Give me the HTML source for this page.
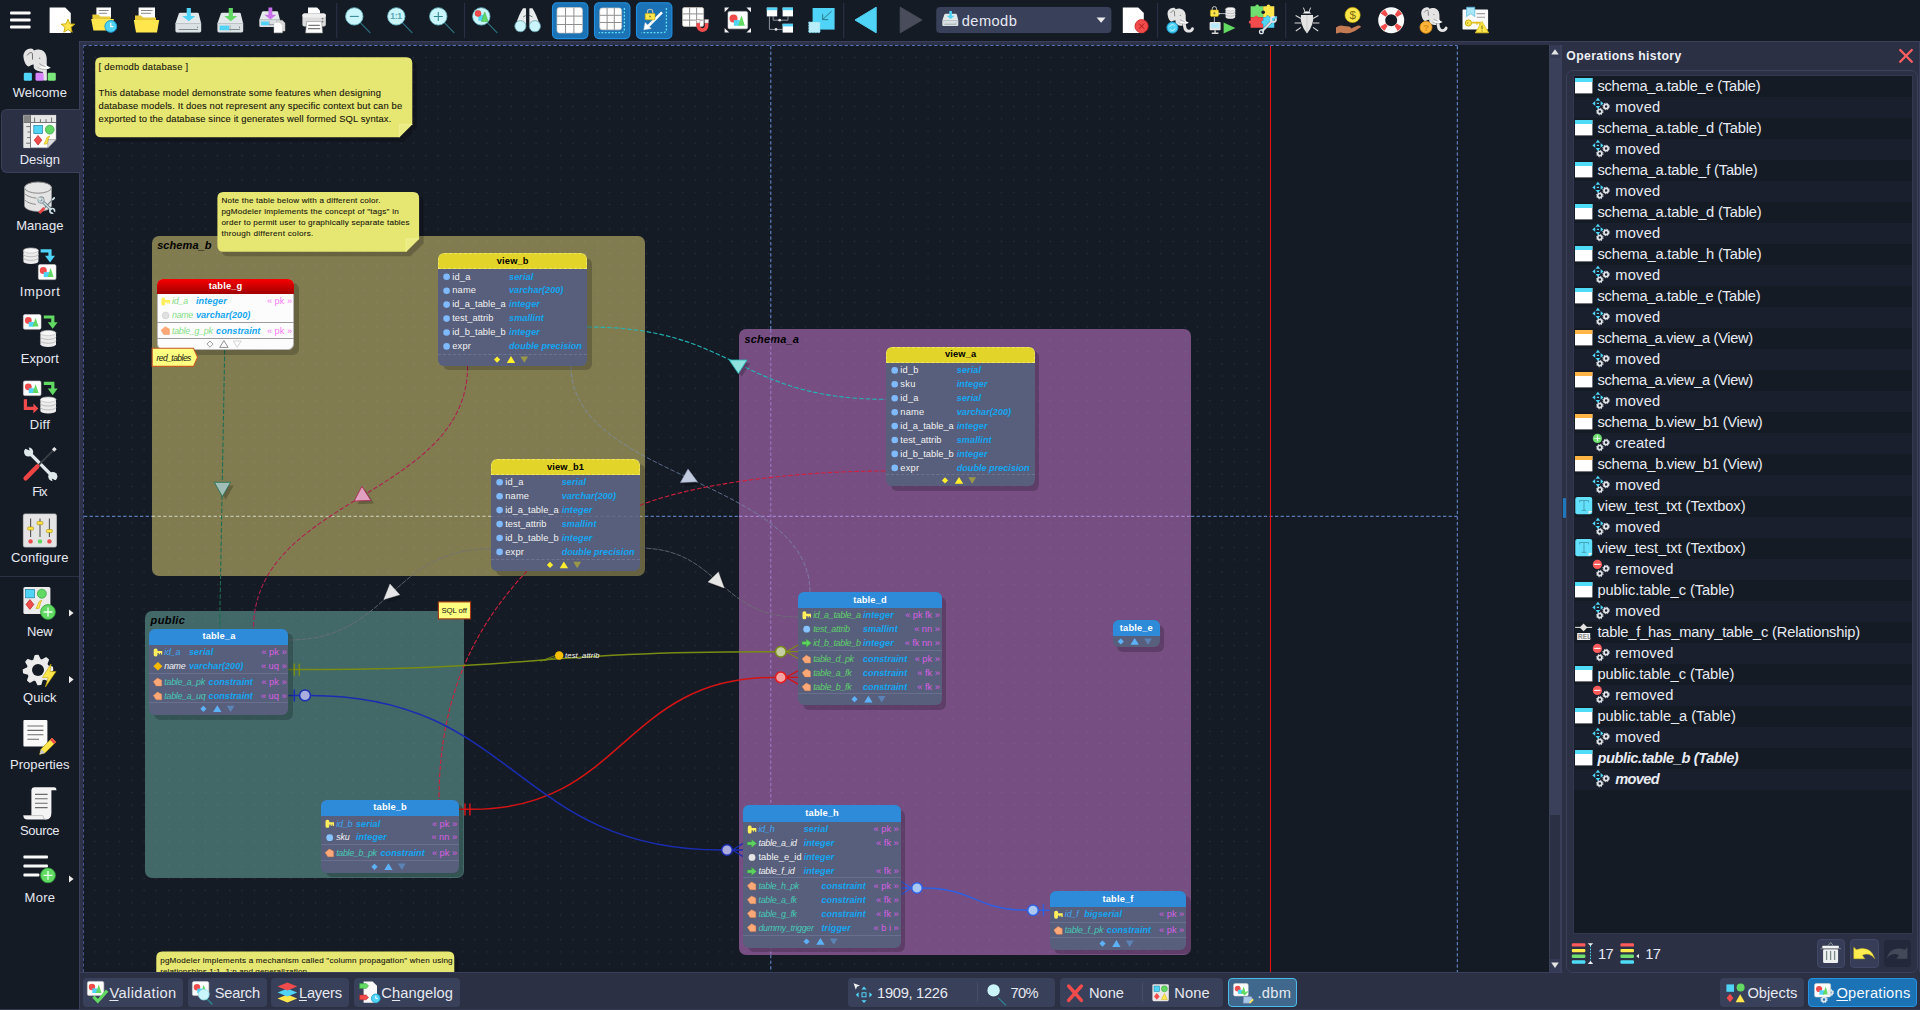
<!DOCTYPE html>
<html><head><meta charset="utf-8"><title>pgModeler</title>
<style>
html,body{margin:0;padding:0;}
body{width:1920px;height:1010px;overflow:hidden;position:relative;background:#151b25;font-family:"Liberation Sans",sans-serif;}
.t{position:absolute;white-space:nowrap;}
.b{position:absolute;box-sizing:border-box;}
svg{position:absolute;overflow:visible;}
u{text-decoration:underline;text-underline-offset:2px;}
</style></head><body>

<div class="b" style="left:79px;top:41px;width:1841px;height:969px;background:#2b3045;"></div>
<div class="b" style="left:79px;top:41px;width:1841px;height:1px;background:#3a405a;"></div>
<div class="b" style="left:79px;top:41px;width:1px;height:969px;background:#3a405a;"></div>
<div class="b" style="left:80px;top:42px;width:3px;height:930px;background:#2d3248;"></div>
<div class="b" style="left:80px;top:42px;width:1470px;height:3px;background:#2d3248;"></div>
<div class="b" style="left:0px;top:1009px;width:1920px;height:1px;background:#353a52;"></div>
<div class="b" style="left:83px;top:45px;width:1466px;height:927px;background:#151b25;overflow:hidden;"></div>
<div class="b" style="left:83px;top:45px;width:1466px;height:927px;overflow:hidden;"><div class="b" style="left:-83px;top:-45px;width:1920px;height:1010px;">
<svg style="left:0;top:0" width="1920" height="1010" fill="none"><g stroke-width="1" stroke-dasharray="3.3 2.3"><path d="M83 45.5 H1457.5" stroke="#5672b8"/><path d="M83.5 45 V972" stroke="#44558e"/></g></svg>
<div class="b" style="left:152px;top:235.5px;width:493px;height:340.5px;background:#817c50;border-radius:7px;"></div>
<div class="b" style="left:739px;top:329.3px;width:452px;height:625.7px;background:#764e82;border-radius:7px;"></div>
<div class="b" style="left:145px;top:610.7px;width:319.3px;height:267.3px;background:#426868;border-radius:7px;"></div>
<div class="b" style="left:84px;top:46px;width:1186px;height:926px;background-image:radial-gradient(circle,rgba(170,180,215,.12) .6px,transparent 1.1px);background-size:12.25px 12.25px;background-position:4.93px 5.48px;"></div>
<div class="t" style="left:157.16px;top:239px;font-size:11px;line-height:12px;color:#000;font-weight:bold;font-style:italic;letter-spacing:0.082px;">schema_b</div>
<div class="t" style="left:744.56px;top:333px;font-size:11px;line-height:12px;color:#000;font-weight:bold;font-style:italic;letter-spacing:0.168px;">schema_a</div>
<div class="t" style="left:150.56px;top:614px;font-size:11px;line-height:12px;color:#000;font-weight:bold;font-style:italic;letter-spacing:0.399px;">public</div>
<svg style="left:0;top:0" width="1920" height="1010" fill="none"><path d="M84 516.3 H152" stroke="#6f98e6" stroke-width="0.95" stroke-dasharray="3.3 2.3"/><path d="M152 516.3 H645" stroke="#d8d8c8" stroke-width="0.95" stroke-dasharray="3.3 2.3"/><path d="M645 516.3 H739" stroke="#6f98e6" stroke-width="0.95" stroke-dasharray="3.3 2.3"/><path d="M739 516.3 H1191" stroke="#b496e6" stroke-width="0.95" stroke-dasharray="3.3 2.3"/><path d="M1191 516.3 H1457" stroke="#6f98e6" stroke-width="0.95" stroke-dasharray="3.3 2.3"/><path d="M770.8 46 V329.3" stroke="#6f98e6" stroke-width="0.95" stroke-dasharray="3.3 2.3"/><path d="M770.8 329.3 V955" stroke="#a585d8" stroke-width="0.85" stroke-dasharray="3.3 2.3"/><path d="M770.8 955 V972" stroke="#6f98e6" stroke-width="0.95" stroke-dasharray="3.3 2.3"/><path d="M1457.3 46 V972" stroke="#6f98e6" stroke-width="0.95" stroke-dasharray="3.3 2.3"/><path d="M1270.5 46 V972" stroke="#e01212" stroke-width="1.1"/><path d="M224.7 350 L219.6 629" stroke="#1d6d55" stroke-width="1.1" stroke-dasharray="4.6 2"/><polygon points="217.5,485.5 233.8,485.5 225.6,499.8" fill="rgba(0,0,0,.22)"/><polygon points="214.3,482.3 230.6,482.3 222.4,496.6" fill="#a0bdb6" stroke="#1d6d55" stroke-width="0.8" stroke-linejoin="round"/><path d="M467.6 366 C467.6 497 253.5 497 253.5 629" stroke="#ad1f4e" stroke-width="1.1" stroke-dasharray="4.6 2"/><polygon points="365.1,489.6 357.4,504.2 374.1,503.6" fill="rgba(0,0,0,.22)"/><polygon points="361.9,486.4 354.2,501.0 370.9,500.4" fill="#dfa0c2" stroke="#ad1f4e" stroke-width="0.8" stroke-linejoin="round"/><path d="M587.3 327 C736.5 327 736.5 399.3 886.1 399.3" stroke="#22b7b7" stroke-width="1.1" stroke-dasharray="4.6 2"/><polygon points="732.4,363.2 750.2,363.2 741.6,376.8" fill="rgba(0,0,0,.22)"/><polygon points="729.2,360.0 747.0,360.0 738.4,373.6" fill="#90e2de" stroke="#22b7b7" stroke-width="0.8" stroke-linejoin="round"/><path d="M571 366 C571 479 810 479 810 592.2" stroke="#7c90b8" stroke-width=".8" stroke-dasharray="4.6 2" opacity=".85"/><polygon points="691.2,472.2 683.6,485.8 700.7,485.0" fill="rgba(0,0,0,.22)"/><polygon points="688.0,469.0 680.4,482.6 697.5,481.8" fill="#c2cadd" stroke="#8f9cbc" stroke-width="0.5" stroke-linejoin="round"/><path d="M640 505.4 C690 485 790 471 886.1 471" stroke="#d21f3e" stroke-width="1.1" stroke-dasharray="4.6 2"/><path d="M527 571 C479.4 622 439 690 439 800" stroke="#d21f3e" stroke-width="1.1" stroke-dasharray="4.6 2"/><path d="M491 548.8 C390 548.8 390 640 289 640" stroke="#6f7076" stroke-width=".8" stroke-dasharray="5 1.2"/><polygon points="393.2,587.2 387.0,602.6 403.0,598.0" fill="rgba(0,0,0,.22)"/><polygon points="390.0,584.0 383.8,599.4 399.8,594.8" fill="#e6e6e6" stroke="#cfcfcf" stroke-width="0.4" stroke-linejoin="round"/><path d="M640 548.1 C719 548.1 719 617 798.1 617" stroke="#6f7076" stroke-width=".8" stroke-dasharray="5 1.2"/><polygon points="721.6,575.2 711.2,585.2 727.4,591.2" fill="rgba(0,0,0,.22)"/><polygon points="718.4,572.0 708.0,582.0 724.2,588.0" fill="#e6e6e6" stroke="#cfcfcf" stroke-width="0.4" stroke-linejoin="round"/><g stroke="#788c14" stroke-width="1.5"><path d="M288.5 669.6 H303 C534 669.6 534 651.7 765 651.7 H776"/><path d="M294.3 663.4 V675.8 M299.3 663.4 V675.8"/><path d="M540.3 661.4 L556 655.2 M544 660.6 L556 657.4" stroke-width=".9"/><path d="M786.2 651.7 L798.1 645 M786.2 651.7 H798.1 M786.2 651.7 L798.1 658.5" stroke-width="1.3"/><circle cx="780.8" cy="651.7" r="5.3" fill="#c6cda2"/></g><circle cx="559.2" cy="655.5" r="4.2" fill="#f7c000"/><g stroke="#d41414" stroke-width="1.5"><path d="M459 809.3 H473 C623 809.3 623 677.4 773 677.4 H776"/><path d="M465 803.4 V815.6 M469.9 803.4 V815.6"/><path d="M786.2 677.4 L798.1 670.7 M786.2 677.4 H798.1 M786.2 677.4 L798.1 684.1" stroke-width="1.3"/><circle cx="780.8" cy="677.4" r="5.3" fill="#f5a3a3" stroke="#e61c1c"/></g><g stroke="#1a2db2" stroke-width="1.5"><path d="M288.5 695.4 H300 M310.5 695.4 C516 695.4 516 850 721.5 850"/><path d="M294.3 689.4 V701.6"/><path d="M732.4 850 L743.4 843.3 M732.4 850 H743.4 M732.4 850 L743.4 856.7" stroke-width="1.3"/><circle cx="305" cy="695.4" r="5.4" fill="#a9acdc"/><circle cx="727" cy="850" r="5.3" fill="#a9acdc"/></g><g stroke="#2f60e2" stroke-width="1.5"><path d="M922.4 888 C975 888 975 910.2 1027.6 910.2 M1038.4 910.2 H1049.8"/><path d="M1043.4 904.2 V916.2"/><path d="M911.6 888 L900.7 881.3 M911.6 888 H900.7 M911.6 888 L900.7 894.7" stroke-width="1.3"/><circle cx="917" cy="888" r="5.3" fill="#aac6f2"/><circle cx="1033" cy="910.2" r="5.3" fill="#aac6f2"/></g></svg>
<div class="t" style="left:565.10px;top:651px;font-size:7.6px;line-height:9px;color:#f4f4f4;font-style:italic;letter-spacing:0.104px;">test_attrib</div>
<div class="b" style="left:161.5px;top:283.0px;width:137px;height:71.5px;background:rgba(0,0,0,.2);border-radius:6px;"></div>
<div class="b" style="left:157px;top:278.5px;width:137px;height:71.5px;background:#fcfcfc;border-radius:6px;border:0.6px solid #b8b8b8;"></div>
<div class="b" style="left:157px;top:278.5px;width:137px;height:15.5px;background:linear-gradient(#f80000,#a00000);border-radius:6px 6px 0 0;"></div>
<div class="t" style="left:208.77px;top:281px;font-size:9.3px;line-height:10px;color:#fff;font-weight:bold;letter-spacing:0.150px;">table_g</div>
<div class="t" style="left:172.04px;top:296px;font-size:8.9px;line-height:10px;color:#86dd86;font-style:italic;letter-spacing:-0.185px;">id_a</div>
<div class="t" style="left:195.94px;top:296px;font-size:9.114px;line-height:10px;color:#12a6f3;font-weight:bold;font-style:italic;letter-spacing:0.070px;">integer</div>
<div class="t" style="left:266.88px;top:296px;font-size:9.3px;line-height:10px;color:#ff7dff;letter-spacing:-0.029px;">« pk »</div>
<div class="t" style="left:172.04px;top:310px;font-size:8.9px;line-height:10px;color:#86dd86;font-style:italic;letter-spacing:-0.321px;">name</div>
<div class="t" style="left:195.94px;top:310px;font-size:9.114px;line-height:10px;color:#12a6f3;font-weight:bold;font-style:italic;letter-spacing:0.016px;">varchar(200)</div>
<div class="b" style="left:157px;top:321.7px;width:137px;height:1px;background:#9c9c9c;"></div>
<div class="t" style="left:172.04px;top:326px;font-size:8.9px;line-height:10px;color:#86dd86;font-style:italic;letter-spacing:-0.285px;">table_g_pk</div>
<div class="t" style="left:216.04px;top:326px;font-size:9.114px;line-height:10px;color:#12a6f3;font-weight:bold;font-style:italic;letter-spacing:0.031px;">constraint</div>
<div class="t" style="left:266.88px;top:326px;font-size:9.3px;line-height:10px;color:#ff7dff;letter-spacing:-0.029px;">« pk »</div>
<div class="b" style="left:157px;top:337.7px;width:137px;height:1px;background:#9c9c9c;"></div>
<svg style="left:0;top:0" width="1920" height="1010"><path d="M161.4 299.4 q0 -1.8 1.8 -1.8 h.5 q1.5 0 1.5 1.6 v.9 h4.7 v3.7 h-1.3 v-1.5 h-.9 v1.2 h-1.2 v-1.2 h-1.3 v1.4 q0 1.9 -1.6 1.9 h-.5 q-1.7 0 -1.7 -1.9z" fill="#ffef5c"/><circle cx="165.6" cy="315.5" r="3.4" fill="#e0e0e0" stroke="#c8c8c8" stroke-width=".5"/><path d="M161.0 330.2 l4.2 -3.5 l4.2 2.2 v5.6 h-5.6z" fill="#ffa877" stroke="#e88850" stroke-width=".4"/><path d="M206.9 344.1 l3.1 -3.1 l3.1 3.1 l-3.1 3.1z" fill="none" stroke="#777" stroke-width=".7"/><path d="M219.7 347.4 h8.4 l-4.2 -6.8z" fill="none" stroke="#666" stroke-width=".7"/><path d="M233.3 341.0 h7.8 l-3.9 6.4z" fill="none" stroke="#c4c4c4" stroke-width=".7"/></svg>
<div class="b" style="left:442.5px;top:257.9px;width:149.29999999999995px;height:112.20000000000002px;background:rgba(0,0,0,.2);border-radius:6px;"></div>
<div class="b" style="left:438px;top:253.4px;width:149.29999999999995px;height:112.20000000000002px;background:#575f7c;border-radius:6px;"></div>
<div class="b" style="left:438px;top:253.4px;width:149.29999999999995px;height:15.799999999999983px;background:#e3d42a;border-radius:6px 6px 0 0;border:0.8px dashed #efe66e;"></div>
<div class="t" style="left:496.77px;top:256px;font-size:9.3px;line-height:10px;color:#000;font-weight:bold;letter-spacing:0.150px;">view_b</div>
<div class="t" style="left:452.23px;top:272px;font-size:9.3px;line-height:10px;color:#f2f2f2;letter-spacing:0.189px;">id_a</div>
<div class="t" style="left:509.04px;top:272px;font-size:9.114px;line-height:10px;color:#12a6f3;font-weight:bold;font-style:italic;letter-spacing:0.097px;">serial</div>
<div class="t" style="left:452.23px;top:285px;font-size:9.3px;line-height:10px;color:#f2f2f2;letter-spacing:0.170px;">name</div>
<div class="t" style="left:509.04px;top:285px;font-size:9.114px;line-height:10px;color:#12a6f3;font-weight:bold;font-style:italic;letter-spacing:0.016px;">varchar(200)</div>
<div class="t" style="left:452.23px;top:299px;font-size:9.3px;line-height:10px;color:#f2f2f2;letter-spacing:0.019px;">id_a_table_a</div>
<div class="t" style="left:509.04px;top:299px;font-size:9.114px;line-height:10px;color:#12a6f3;font-weight:bold;font-style:italic;letter-spacing:0.070px;">integer</div>
<div class="t" style="left:452.23px;top:313px;font-size:9.3px;line-height:10px;color:#f2f2f2;letter-spacing:0.034px;">test_attrib</div>
<div class="t" style="left:509.04px;top:313px;font-size:9.114px;line-height:10px;color:#12a6f3;font-weight:bold;font-style:italic;letter-spacing:0.054px;">smallint</div>
<div class="t" style="left:452.23px;top:327px;font-size:9.3px;line-height:10px;color:#f2f2f2;letter-spacing:0.019px;">id_b_table_b</div>
<div class="t" style="left:509.04px;top:327px;font-size:9.114px;line-height:10px;color:#12a6f3;font-weight:bold;font-style:italic;letter-spacing:0.070px;">integer</div>
<div class="t" style="left:452.23px;top:341px;font-size:9.3px;line-height:10px;color:#f2f2f2;letter-spacing:0.188px;">expr</div>
<div class="t" style="left:509.04px;top:341px;font-size:9.114px;line-height:10px;color:#12a6f3;font-weight:bold;font-style:italic;">double precision</div>
<div class="b" style="left:438px;top:353.5px;width:149.29999999999995px;height:1px;border-top:0.8px dashed #6c7491;"></div>
<svg style="left:0;top:0" width="1920" height="1010"><circle cx="446.6" cy="276.8" r="3.3" fill="#7fbaff"/><circle cx="446.6" cy="290.7" r="3.3" fill="#7fbaff"/><circle cx="446.6" cy="304.6" r="3.3" fill="#7fbaff"/><circle cx="446.6" cy="318.6" r="3.3" fill="#7fbaff"/><circle cx="446.6" cy="332.5" r="3.3" fill="#7fbaff"/><circle cx="446.6" cy="346.4" r="3.3" fill="#7fbaff"/><path d="M494.0 359.6 l3.1 -3.1 l3.1 3.1 l-3.1 3.1z" fill="#ffee2e"/><path d="M506.8 362.9 h8.4 l-4.2 -6.8z" fill="#ffee2e"/><path d="M520.4 356.4 h7.8 l-3.9 6.4z" fill="#9a9748"/></svg>
<div class="b" style="left:495.5px;top:463.5px;width:149px;height:112px;background:rgba(0,0,0,.2);border-radius:6px;"></div>
<div class="b" style="left:491px;top:459px;width:149px;height:112px;background:#575f7c;border-radius:6px;"></div>
<div class="b" style="left:491px;top:459px;width:149px;height:15.699999999999989px;background:#e3d42a;border-radius:6px 6px 0 0;border:0.8px dashed #efe66e;"></div>
<div class="t" style="left:546.96px;top:462px;font-size:9.3px;line-height:10px;color:#000;font-weight:bold;letter-spacing:0.150px;">view_b1</div>
<div class="t" style="left:505.23px;top:477px;font-size:9.3px;line-height:10px;color:#f2f2f2;letter-spacing:0.189px;">id_a</div>
<div class="t" style="left:561.64px;top:477px;font-size:9.114px;line-height:10px;color:#12a6f3;font-weight:bold;font-style:italic;letter-spacing:0.097px;">serial</div>
<div class="t" style="left:505.23px;top:491px;font-size:9.3px;line-height:10px;color:#f2f2f2;letter-spacing:0.170px;">name</div>
<div class="t" style="left:561.64px;top:491px;font-size:9.114px;line-height:10px;color:#12a6f3;font-weight:bold;font-style:italic;letter-spacing:0.016px;">varchar(200)</div>
<div class="t" style="left:505.23px;top:505px;font-size:9.3px;line-height:10px;color:#f2f2f2;letter-spacing:0.019px;">id_a_table_a</div>
<div class="t" style="left:561.64px;top:505px;font-size:9.114px;line-height:10px;color:#12a6f3;font-weight:bold;font-style:italic;letter-spacing:0.070px;">integer</div>
<div class="t" style="left:505.23px;top:519px;font-size:9.3px;line-height:10px;color:#f2f2f2;letter-spacing:0.034px;">test_attrib</div>
<div class="t" style="left:561.64px;top:519px;font-size:9.114px;line-height:10px;color:#12a6f3;font-weight:bold;font-style:italic;letter-spacing:0.054px;">smallint</div>
<div class="t" style="left:505.23px;top:533px;font-size:9.3px;line-height:10px;color:#f2f2f2;letter-spacing:0.019px;">id_b_table_b</div>
<div class="t" style="left:561.64px;top:533px;font-size:9.114px;line-height:10px;color:#12a6f3;font-weight:bold;font-style:italic;letter-spacing:0.070px;">integer</div>
<div class="t" style="left:505.23px;top:547px;font-size:9.3px;line-height:10px;color:#f2f2f2;letter-spacing:0.188px;">expr</div>
<div class="t" style="left:561.64px;top:547px;font-size:9.114px;line-height:10px;color:#12a6f3;font-weight:bold;font-style:italic;">double precision</div>
<div class="b" style="left:491px;top:558.8px;width:149px;height:1px;border-top:0.8px dashed #6c7491;"></div>
<svg style="left:0;top:0" width="1920" height="1010"><circle cx="499.6" cy="482.3" r="3.3" fill="#7fbaff"/><circle cx="499.6" cy="496.2" r="3.3" fill="#7fbaff"/><circle cx="499.6" cy="510.1" r="3.3" fill="#7fbaff"/><circle cx="499.6" cy="524.1" r="3.3" fill="#7fbaff"/><circle cx="499.6" cy="538.0" r="3.3" fill="#7fbaff"/><circle cx="499.6" cy="551.9" r="3.3" fill="#7fbaff"/><path d="M546.9 564.9 l3.1 -3.1 l3.1 3.1 l-3.1 3.1z" fill="#ffee2e"/><path d="M559.7 568.2 h8.4 l-4.2 -6.8z" fill="#ffee2e"/><path d="M573.3 561.8 h7.8 l-3.9 6.4z" fill="#9a9748"/></svg>
<svg style="left:0;top:0" width="1920" height="1010"><path d="M491 516.3 H640" stroke="#6b7391" stroke-width=".9" stroke-dasharray="3.1 2.67"/></svg>
<div class="b" style="left:890.6px;top:351.4px;width:148.89999999999998px;height:139.60000000000002px;background:rgba(0,0,0,.2);border-radius:6px;"></div>
<div class="b" style="left:886.1px;top:346.9px;width:148.89999999999998px;height:139.60000000000002px;background:#575f7c;border-radius:6px;"></div>
<div class="b" style="left:886.1px;top:346.9px;width:148.89999999999998px;height:15.900000000000034px;background:#e3d42a;border-radius:6px 6px 0 0;border:0.8px dashed #efe66e;"></div>
<div class="t" style="left:944.92px;top:349px;font-size:9.3px;line-height:10px;color:#000;font-weight:bold;letter-spacing:0.150px;">view_a</div>
<div class="t" style="left:900.33px;top:365px;font-size:9.3px;line-height:10px;color:#f2f2f2;letter-spacing:0.189px;">id_b</div>
<div class="t" style="left:956.74px;top:365px;font-size:9.114px;line-height:10px;color:#12a6f3;font-weight:bold;font-style:italic;letter-spacing:0.097px;">serial</div>
<div class="t" style="left:900.33px;top:379px;font-size:9.3px;line-height:10px;color:#f2f2f2;letter-spacing:0.300px;">sku</div>
<div class="t" style="left:956.74px;top:379px;font-size:9.114px;line-height:10px;color:#12a6f3;font-weight:bold;font-style:italic;letter-spacing:0.070px;">integer</div>
<div class="t" style="left:900.33px;top:393px;font-size:9.3px;line-height:10px;color:#f2f2f2;letter-spacing:0.189px;">id_a</div>
<div class="t" style="left:956.74px;top:393px;font-size:9.114px;line-height:10px;color:#12a6f3;font-weight:bold;font-style:italic;letter-spacing:0.097px;">serial</div>
<div class="t" style="left:900.33px;top:407px;font-size:9.3px;line-height:10px;color:#f2f2f2;letter-spacing:0.170px;">name</div>
<div class="t" style="left:956.74px;top:407px;font-size:9.114px;line-height:10px;color:#12a6f3;font-weight:bold;font-style:italic;letter-spacing:0.016px;">varchar(200)</div>
<div class="t" style="left:900.33px;top:421px;font-size:9.3px;line-height:10px;color:#f2f2f2;letter-spacing:0.019px;">id_a_table_a</div>
<div class="t" style="left:956.74px;top:421px;font-size:9.114px;line-height:10px;color:#12a6f3;font-weight:bold;font-style:italic;letter-spacing:0.070px;">integer</div>
<div class="t" style="left:900.33px;top:435px;font-size:9.3px;line-height:10px;color:#f2f2f2;letter-spacing:0.034px;">test_attrib</div>
<div class="t" style="left:956.74px;top:435px;font-size:9.114px;line-height:10px;color:#12a6f3;font-weight:bold;font-style:italic;letter-spacing:0.054px;">smallint</div>
<div class="t" style="left:900.33px;top:449px;font-size:9.3px;line-height:10px;color:#f2f2f2;letter-spacing:0.019px;">id_b_table_b</div>
<div class="t" style="left:956.74px;top:449px;font-size:9.114px;line-height:10px;color:#12a6f3;font-weight:bold;font-style:italic;letter-spacing:0.070px;">integer</div>
<div class="t" style="left:900.33px;top:463px;font-size:9.3px;line-height:10px;color:#f2f2f2;letter-spacing:0.188px;">expr</div>
<div class="t" style="left:956.74px;top:463px;font-size:9.114px;line-height:10px;color:#12a6f3;font-weight:bold;font-style:italic;">double precision</div>
<div class="b" style="left:886.1px;top:474.3px;width:148.89999999999998px;height:1px;border-top:0.8px dashed #6c7491;"></div>
<svg style="left:0;top:0" width="1920" height="1010"><circle cx="894.7" cy="370.4" r="3.3" fill="#7fbaff"/><circle cx="894.7" cy="384.3" r="3.3" fill="#7fbaff"/><circle cx="894.7" cy="398.2" r="3.3" fill="#7fbaff"/><circle cx="894.7" cy="412.2" r="3.3" fill="#7fbaff"/><circle cx="894.7" cy="426.1" r="3.3" fill="#7fbaff"/><circle cx="894.7" cy="440.0" r="3.3" fill="#7fbaff"/><circle cx="894.7" cy="453.9" r="3.3" fill="#7fbaff"/><circle cx="894.7" cy="467.9" r="3.3" fill="#7fbaff"/><path d="M941.9 480.4 l3.1 -3.1 l3.1 3.1 l-3.1 3.1z" fill="#ffee2e"/><path d="M954.8 483.7 h8.4 l-4.2 -6.8z" fill="#ffee2e"/><path d="M968.3 477.3 h7.8 l-3.9 6.4z" fill="#9a9748"/></svg>
<div class="b" style="left:802.6px;top:596.7px;width:143.69999999999993px;height:113.19999999999993px;background:rgba(0,0,0,.2);border-radius:6px;"></div>
<div class="b" style="left:798.1px;top:592.2px;width:143.69999999999993px;height:113.19999999999993px;background:#575f7c;border-radius:6px;"></div>
<div class="b" style="left:798.1px;top:592.2px;width:143.69999999999993px;height:15.5px;background:#2e8bda;border-radius:6px 6px 0 0;"></div>
<div class="t" style="left:853.22px;top:595px;font-size:9.3px;line-height:10px;color:#fff;font-weight:bold;letter-spacing:0.150px;">table_d</div>
<div class="t" style="left:813.14px;top:610px;font-size:8.9px;line-height:10px;color:#5fd06a;font-style:italic;letter-spacing:-0.284px;">id_a_table_a</div>
<div class="t" style="left:862.94px;top:610px;font-size:9.114px;line-height:10px;color:#12a6f3;font-weight:bold;font-style:italic;letter-spacing:0.070px;">integer</div>
<div class="t" style="left:905.21px;top:610px;font-size:9.3px;line-height:10px;color:#d95ee2;letter-spacing:-0.061px;">« pk fk »</div>
<div class="t" style="left:813.14px;top:624px;font-size:8.9px;line-height:10px;color:#5fd06a;font-style:italic;letter-spacing:-0.223px;">test_attrib</div>
<div class="t" style="left:862.94px;top:624px;font-size:9.114px;line-height:10px;color:#12a6f3;font-weight:bold;font-style:italic;letter-spacing:0.054px;">smallint</div>
<div class="t" style="left:914.18px;top:624px;font-size:9.3px;line-height:10px;color:#d95ee2;letter-spacing:-0.032px;">« nn »</div>
<div class="t" style="left:813.14px;top:638px;font-size:8.9px;line-height:10px;color:#5fd06a;font-style:italic;letter-spacing:-0.284px;">id_b_table_b</div>
<div class="t" style="left:862.94px;top:638px;font-size:9.114px;line-height:10px;color:#12a6f3;font-weight:bold;font-style:italic;letter-spacing:0.070px;">integer</div>
<div class="t" style="left:904.71px;top:638px;font-size:9.3px;line-height:10px;color:#d95ee2;letter-spacing:-0.063px;">« fk nn »</div>
<div class="b" style="left:798.1px;top:650.2px;width:143.69999999999993px;height:1px;background:#68708d;"></div>
<div class="t" style="left:813.14px;top:654px;font-size:8.9px;line-height:10px;color:#5fd06a;font-style:italic;letter-spacing:-0.285px;">table_d_pk</div>
<div class="t" style="left:862.94px;top:654px;font-size:9.114px;line-height:10px;color:#12a6f3;font-weight:bold;font-style:italic;letter-spacing:0.031px;">constraint</div>
<div class="t" style="left:914.68px;top:654px;font-size:9.3px;line-height:10px;color:#d95ee2;letter-spacing:-0.029px;">« pk »</div>
<div class="t" style="left:813.14px;top:668px;font-size:8.9px;line-height:10px;color:#5fd06a;font-style:italic;letter-spacing:-0.264px;">table_a_fk</div>
<div class="t" style="left:862.94px;top:668px;font-size:9.114px;line-height:10px;color:#12a6f3;font-weight:bold;font-style:italic;letter-spacing:0.031px;">constraint</div>
<div class="t" style="left:917.18px;top:668px;font-size:9.3px;line-height:10px;color:#d95ee2;letter-spacing:-0.010px;">« fk »</div>
<div class="t" style="left:813.14px;top:682px;font-size:8.9px;line-height:10px;color:#5fd06a;font-style:italic;letter-spacing:-0.264px;">table_b_fk</div>
<div class="t" style="left:862.94px;top:682px;font-size:9.114px;line-height:10px;color:#12a6f3;font-weight:bold;font-style:italic;letter-spacing:0.031px;">constraint</div>
<div class="t" style="left:917.18px;top:682px;font-size:9.3px;line-height:10px;color:#d95ee2;letter-spacing:-0.010px;">« fk »</div>
<div class="b" style="left:798.1px;top:692.5px;width:143.69999999999993px;height:1px;background:#68708d;"></div>
<svg style="left:0;top:0" width="1920" height="1010"><path d="M802.5 613.1 q0 -1.8 1.8 -1.8 h.5 q1.5 0 1.5 1.6 v.9 h4.7 v3.7 h-1.3 v-1.5 h-.9 v1.2 h-1.2 v-1.2 h-1.3 v1.4 q0 1.9 -1.6 1.9 h-.5 q-1.7 0 -1.7 -1.9z" fill="#ffef5c"/><circle cx="806.7" cy="629.2" r="3.4" fill="#86c3ff"/><path d="M802.1 641.6 h4.2 v-2.6 l5 4.1 l-5 4.1 v-2.6 h-4.2z" fill="#5fd35f" stroke="#2f9d3a" stroke-width=".4"/><path d="M802.1 658.7 l4.2 -3.5 l4.2 2.2 v5.6 h-5.6z" fill="#ffa877" stroke="#e88850" stroke-width=".4"/><path d="M802.1 672.6 l4.2 -3.5 l4.2 2.2 v5.6 h-5.6z" fill="#ffa877" stroke="#e88850" stroke-width=".4"/><path d="M802.1 686.5 l4.2 -3.5 l4.2 2.2 v5.6 h-5.6z" fill="#ffa877" stroke="#e88850" stroke-width=".4"/><path d="M851.4 699.2 l3.1 -3.1 l3.1 3.1 l-3.1 3.1z" fill="#5db2f7"/><path d="M864.2 702.5 h8.4 l-4.2 -6.8z" fill="#5db2f7"/><path d="M877.8 696.1 h7.8 l-3.9 6.4z" fill="#5d83b4"/></svg>
<div class="b" style="left:1117.2px;top:624.6px;width:47.200000000000045px;height:27.100000000000023px;background:rgba(0,0,0,.2);border-radius:6px;"></div>
<div class="b" style="left:1112.7px;top:620.1px;width:47.200000000000045px;height:27.100000000000023px;background:#575f7c;border-radius:6px;"></div>
<div class="b" style="left:1112.7px;top:620.1px;width:47.200000000000045px;height:15.600000000000023px;background:#2e8bda;border-radius:6px 6px 0 0;"></div>
<div class="t" style="left:1119.83px;top:623px;font-size:9.3px;line-height:10px;color:#fff;font-weight:bold;letter-spacing:0.150px;">table_e</div>
<svg style="left:0;top:0" width="1920" height="1010"><path d="M1117.7 641.5 l3.1 -3.1 l3.1 3.1 l-3.1 3.1z" fill="#5db2f7"/><path d="M1130.5 644.8 h8.4 l-4.2 -6.8z" fill="#5db2f7"/><path d="M1144.1 638.4 h7.8 l-3.9 6.4z" fill="#5d83b4"/></svg>
<div class="b" style="left:747.9px;top:809.6px;width:157.30000000000007px;height:142.69999999999993px;background:rgba(0,0,0,.2);border-radius:6px;"></div>
<div class="b" style="left:743.4px;top:805.1px;width:157.30000000000007px;height:142.69999999999993px;background:#575f7c;border-radius:6px;"></div>
<div class="b" style="left:743.4px;top:805.1px;width:157.30000000000007px;height:16.899999999999977px;background:#2e8bda;border-radius:6px 6px 0 0;"></div>
<div class="t" style="left:805.32px;top:808px;font-size:9.3px;line-height:10px;color:#fff;font-weight:bold;letter-spacing:0.150px;">table_h</div>
<div class="t" style="left:758.44px;top:824px;font-size:8.9px;line-height:10px;color:#3fa6f7;font-style:italic;letter-spacing:-0.185px;">id_h</div>
<div class="t" style="left:803.64px;top:824px;font-size:9.114px;line-height:10px;color:#12a6f3;font-weight:bold;font-style:italic;letter-spacing:0.097px;">serial</div>
<div class="t" style="left:873.58px;top:824px;font-size:9.3px;line-height:10px;color:#d95ee2;letter-spacing:-0.029px;">« pk »</div>
<div class="t" style="left:758.44px;top:838px;font-size:8.9px;line-height:10px;color:#f2f2f2;font-style:italic;letter-spacing:-0.264px;">table_a_id</div>
<div class="t" style="left:803.64px;top:838px;font-size:9.114px;line-height:10px;color:#12a6f3;font-weight:bold;font-style:italic;letter-spacing:0.070px;">integer</div>
<div class="t" style="left:876.08px;top:838px;font-size:9.3px;line-height:10px;color:#d95ee2;letter-spacing:-0.010px;">« fk »</div>
<div class="t" style="left:758.43px;top:852px;font-size:9.3px;line-height:10px;color:#f2f2f2;letter-spacing:0.035px;">table_e_id</div>
<div class="t" style="left:803.64px;top:852px;font-size:9.114px;line-height:10px;color:#12a6f3;font-weight:bold;font-style:italic;letter-spacing:0.070px;">integer</div>
<div class="t" style="left:758.44px;top:866px;font-size:8.9px;line-height:10px;color:#f2f2f2;font-style:italic;letter-spacing:-0.243px;">table_f_id</div>
<div class="t" style="left:803.64px;top:866px;font-size:9.114px;line-height:10px;color:#12a6f3;font-weight:bold;font-style:italic;letter-spacing:0.070px;">integer</div>
<div class="t" style="left:876.08px;top:866px;font-size:9.3px;line-height:10px;color:#d95ee2;letter-spacing:-0.010px;">« fk »</div>
<div class="b" style="left:743.4px;top:877.0px;width:157.30000000000007px;height:1px;background:#68708d;"></div>
<div class="t" style="left:758.44px;top:881px;font-size:8.9px;line-height:10px;color:#46c9b6;font-style:italic;letter-spacing:-0.285px;">table_h_pk</div>
<div class="t" style="left:821.44px;top:881px;font-size:9.114px;line-height:10px;color:#12a6f3;font-weight:bold;font-style:italic;letter-spacing:0.031px;">constraint</div>
<div class="t" style="left:873.58px;top:881px;font-size:9.3px;line-height:10px;color:#d95ee2;letter-spacing:-0.029px;">« pk »</div>
<div class="t" style="left:758.44px;top:895px;font-size:8.9px;line-height:10px;color:#46c9b6;font-style:italic;letter-spacing:-0.264px;">table_a_fk</div>
<div class="t" style="left:821.44px;top:895px;font-size:9.114px;line-height:10px;color:#12a6f3;font-weight:bold;font-style:italic;letter-spacing:0.031px;">constraint</div>
<div class="t" style="left:876.08px;top:895px;font-size:9.3px;line-height:10px;color:#d95ee2;letter-spacing:-0.010px;">« fk »</div>
<div class="t" style="left:758.44px;top:909px;font-size:8.9px;line-height:10px;color:#46c9b6;font-style:italic;letter-spacing:-0.264px;">table_g_fk</div>
<div class="t" style="left:821.44px;top:909px;font-size:9.114px;line-height:10px;color:#12a6f3;font-weight:bold;font-style:italic;letter-spacing:0.031px;">constraint</div>
<div class="t" style="left:876.08px;top:909px;font-size:9.3px;line-height:10px;color:#d95ee2;letter-spacing:-0.010px;">« fk »</div>
<div class="t" style="left:758.44px;top:923px;font-size:8.9px;line-height:10px;color:#46c9b6;font-style:italic;letter-spacing:-0.313px;">dummy_trigger</div>
<div class="t" style="left:821.44px;top:923px;font-size:9.114px;line-height:10px;color:#12a6f3;font-weight:bold;font-style:italic;letter-spacing:0.072px;">trigger</div>
<div class="t" style="left:873.58px;top:923px;font-size:9.3px;line-height:10px;color:#d95ee2;letter-spacing:-0.024px;">« b i »</div>
<div class="b" style="left:743.4px;top:934.7px;width:157.30000000000007px;height:1px;background:#68708d;"></div>
<svg style="left:0;top:0" width="1920" height="1010"><path d="M747.8 827.4 q0 -1.8 1.8 -1.8 h.5 q1.5 0 1.5 1.6 v.9 h4.7 v3.7 h-1.3 v-1.5 h-.9 v1.2 h-1.2 v-1.2 h-1.3 v1.4 q0 1.9 -1.6 1.9 h-.5 q-1.7 0 -1.7 -1.9z" fill="#ffef5c"/><path d="M747.4 842.0 h4.2 v-2.6 l5 4.1 l-5 4.1 v-2.6 h-4.2z" fill="#5fd35f" stroke="#2f9d3a" stroke-width=".4"/><circle cx="752.0" cy="857.4" r="3.4" fill="#e6e6e6"/><path d="M747.4 869.9 h4.2 v-2.6 l5 4.1 l-5 4.1 v-2.6 h-4.2z" fill="#5fd35f" stroke="#2f9d3a" stroke-width=".4"/><path d="M747.4 885.5 l4.2 -3.5 l4.2 2.2 v5.6 h-5.6z" fill="#ffa877" stroke="#e88850" stroke-width=".4"/><path d="M747.4 899.4 l4.2 -3.5 l4.2 2.2 v5.6 h-5.6z" fill="#ffa877" stroke="#e88850" stroke-width=".4"/><path d="M747.4 913.3 l4.2 -3.5 l4.2 2.2 v5.6 h-5.6z" fill="#ffa877" stroke="#e88850" stroke-width=".4"/><path d="M747.4 927.3 l4.2 -3.5 l4.2 2.2 v5.6 h-5.6z" fill="#ffa877" stroke="#e88850" stroke-width=".4"/><path d="M803.4 941.5 l3.1 -3.1 l3.1 3.1 l-3.1 3.1z" fill="#5db2f7"/><path d="M816.2 944.8 h8.4 l-4.2 -6.8z" fill="#5db2f7"/><path d="M829.8 938.4 h7.8 l-3.9 6.4z" fill="#5d83b4"/></svg>
<div class="b" style="left:1054.3px;top:895.6px;width:136.4000000000001px;height:58.60000000000002px;background:rgba(0,0,0,.2);border-radius:6px;"></div>
<div class="b" style="left:1049.8px;top:891.1px;width:136.4000000000001px;height:58.60000000000002px;background:#575f7c;border-radius:6px;"></div>
<div class="b" style="left:1049.8px;top:891.1px;width:136.4000000000001px;height:16.0px;background:#2e8bda;border-radius:6px 6px 0 0;"></div>
<div class="t" style="left:1102.56px;top:894px;font-size:9.3px;line-height:10px;color:#fff;font-weight:bold;letter-spacing:0.150px;">table_f</div>
<div class="t" style="left:1064.84px;top:909px;font-size:8.9px;line-height:10px;color:#3fa6f7;font-style:italic;letter-spacing:-0.122px;">id_f</div>
<div class="t" style="left:1084.14px;top:909px;font-size:9.114px;line-height:10px;color:#12a6f3;font-weight:bold;font-style:italic;letter-spacing:0.043px;">bigserial</div>
<div class="t" style="left:1159.08px;top:909px;font-size:9.3px;line-height:10px;color:#d95ee2;letter-spacing:-0.029px;">« pk »</div>
<div class="b" style="left:1049.8px;top:921.5px;width:136.4000000000001px;height:1px;background:#68708d;"></div>
<div class="t" style="left:1064.84px;top:925px;font-size:8.9px;line-height:10px;color:#46c9b6;font-style:italic;letter-spacing:-0.264px;">table_f_pk</div>
<div class="t" style="left:1106.84px;top:925px;font-size:9.114px;line-height:10px;color:#12a6f3;font-weight:bold;font-style:italic;letter-spacing:0.031px;">constraint</div>
<div class="t" style="left:1159.08px;top:925px;font-size:9.3px;line-height:10px;color:#d95ee2;letter-spacing:-0.029px;">« pk »</div>
<div class="b" style="left:1049.8px;top:937.0px;width:136.4000000000001px;height:1px;background:#68708d;"></div>
<svg style="left:0;top:0" width="1920" height="1010"><path d="M1054.2 912.5 q0 -1.8 1.8 -1.8 h.5 q1.5 0 1.5 1.6 v.9 h4.7 v3.7 h-1.3 v-1.5 h-.9 v1.2 h-1.2 v-1.2 h-1.3 v1.4 q0 1.9 -1.6 1.9 h-.5 q-1.7 0 -1.7 -1.9z" fill="#ffef5c"/><path d="M1053.8 930.0 l4.2 -3.5 l4.2 2.2 v5.6 h-5.6z" fill="#ffa877" stroke="#e88850" stroke-width=".4"/><path d="M1099.4 943.6 l3.1 -3.1 l3.1 3.1 l-3.1 3.1z" fill="#5db2f7"/><path d="M1112.2 946.9 h8.4 l-4.2 -6.8z" fill="#5db2f7"/><path d="M1125.8 940.5 h7.8 l-3.9 6.4z" fill="#5d83b4"/></svg>
<div class="b" style="left:153.8px;top:633.3px;width:139.2px;height:86.5px;background:rgba(0,0,0,.2);border-radius:6px;"></div>
<div class="b" style="left:149.3px;top:628.8px;width:139.2px;height:86.5px;background:#575f7c;border-radius:6px;"></div>
<div class="b" style="left:149.3px;top:628.8px;width:139.2px;height:16.0px;background:#2e8bda;border-radius:6px 6px 0 0;"></div>
<div class="t" style="left:202.43px;top:631px;font-size:9.3px;line-height:10px;color:#fff;font-weight:bold;letter-spacing:0.150px;">table_a</div>
<div class="t" style="left:164.34px;top:647px;font-size:8.9px;line-height:10px;color:#3fa6f7;font-style:italic;letter-spacing:-0.185px;">id_a</div>
<div class="t" style="left:188.94px;top:647px;font-size:9.114px;line-height:10px;color:#12a6f3;font-weight:bold;font-style:italic;letter-spacing:0.097px;">serial</div>
<div class="t" style="left:261.38px;top:647px;font-size:9.3px;line-height:10px;color:#d95ee2;letter-spacing:-0.029px;">« pk »</div>
<div class="t" style="left:164.34px;top:661px;font-size:8.9px;line-height:10px;color:#f2f2f2;font-style:italic;letter-spacing:-0.321px;">name</div>
<div class="t" style="left:188.94px;top:661px;font-size:9.114px;line-height:10px;color:#12a6f3;font-weight:bold;font-style:italic;letter-spacing:0.016px;">varchar(200)</div>
<div class="t" style="left:260.88px;top:661px;font-size:9.3px;line-height:10px;color:#d95ee2;letter-spacing:-0.032px;">« uq »</div>
<div class="b" style="left:149.3px;top:673.1px;width:139.2px;height:1px;background:#68708d;"></div>
<div class="t" style="left:164.34px;top:677px;font-size:8.9px;line-height:10px;color:#46c9b6;font-style:italic;letter-spacing:-0.285px;">table_a_pk</div>
<div class="t" style="left:208.54px;top:677px;font-size:9.114px;line-height:10px;color:#12a6f3;font-weight:bold;font-style:italic;letter-spacing:0.031px;">constraint</div>
<div class="t" style="left:261.38px;top:677px;font-size:9.3px;line-height:10px;color:#d95ee2;letter-spacing:-0.029px;">« pk »</div>
<div class="t" style="left:164.34px;top:691px;font-size:8.9px;line-height:10px;color:#46c9b6;font-style:italic;letter-spacing:-0.289px;">table_a_uq</div>
<div class="t" style="left:208.54px;top:691px;font-size:9.114px;line-height:10px;color:#12a6f3;font-weight:bold;font-style:italic;letter-spacing:0.031px;">constraint</div>
<div class="t" style="left:260.88px;top:691px;font-size:9.3px;line-height:10px;color:#d95ee2;letter-spacing:-0.032px;">« uq »</div>
<div class="b" style="left:149.3px;top:701.9px;width:139.2px;height:1px;background:#68708d;"></div>
<svg style="left:0;top:0" width="1920" height="1010"><path d="M153.7 650.2 q0 -1.8 1.8 -1.8 h.5 q1.5 0 1.5 1.6 v.9 h4.7 v3.7 h-1.3 v-1.5 h-.9 v1.2 h-1.2 v-1.2 h-1.3 v1.4 q0 1.9 -1.6 1.9 h-.5 q-1.7 0 -1.7 -1.9z" fill="#ffef5c"/><path d="M153.3 666.3 l4.6 -4.2 l4.6 4.2 l-4.6 4.2z" fill="#f7b800"/><path d="M153.3 681.6 l4.2 -3.5 l4.2 2.2 v5.6 h-5.6z" fill="#ffa877" stroke="#e88850" stroke-width=".4"/><path d="M153.3 695.5 l4.2 -3.5 l4.2 2.2 v5.6 h-5.6z" fill="#ffa877" stroke="#e88850" stroke-width=".4"/><path d="M200.3 708.8 l3.1 -3.1 l3.1 3.1 l-3.1 3.1z" fill="#5db2f7"/><path d="M213.1 712.1 h8.4 l-4.2 -6.8z" fill="#5db2f7"/><path d="M226.7 705.7 h7.8 l-3.9 6.4z" fill="#5d83b4"/></svg>
<div class="b" style="left:325.6px;top:804.4px;width:137.89999999999998px;height:73.10000000000002px;background:rgba(0,0,0,.2);border-radius:6px;"></div>
<div class="b" style="left:321.1px;top:799.9px;width:137.89999999999998px;height:73.10000000000002px;background:#575f7c;border-radius:6px;"></div>
<div class="b" style="left:321.1px;top:799.9px;width:137.89999999999998px;height:16.300000000000068px;background:#2e8bda;border-radius:6px 6px 0 0;"></div>
<div class="t" style="left:373.32px;top:802px;font-size:9.3px;line-height:10px;color:#fff;font-weight:bold;letter-spacing:0.150px;">table_b</div>
<div class="t" style="left:336.14px;top:819px;font-size:8.9px;line-height:10px;color:#3fa6f7;font-style:italic;letter-spacing:-0.185px;">id_b</div>
<div class="t" style="left:355.94px;top:819px;font-size:9.114px;line-height:10px;color:#12a6f3;font-weight:bold;font-style:italic;letter-spacing:0.097px;">serial</div>
<div class="t" style="left:431.88px;top:819px;font-size:9.3px;line-height:10px;color:#d95ee2;letter-spacing:-0.029px;">« pk »</div>
<div class="t" style="left:336.14px;top:832px;font-size:8.9px;line-height:10px;color:#f2f2f2;font-style:italic;letter-spacing:-0.165px;">sku</div>
<div class="t" style="left:355.94px;top:832px;font-size:9.114px;line-height:10px;color:#12a6f3;font-weight:bold;font-style:italic;letter-spacing:0.070px;">integer</div>
<div class="t" style="left:431.38px;top:832px;font-size:9.3px;line-height:10px;color:#d95ee2;letter-spacing:-0.032px;">« nn »</div>
<div class="b" style="left:321.1px;top:844.0px;width:137.89999999999998px;height:1px;background:#68708d;"></div>
<div class="t" style="left:336.14px;top:848px;font-size:8.9px;line-height:10px;color:#46c9b6;font-style:italic;letter-spacing:-0.285px;">table_b_pk</div>
<div class="t" style="left:380.44px;top:848px;font-size:9.114px;line-height:10px;color:#12a6f3;font-weight:bold;font-style:italic;letter-spacing:0.031px;">constraint</div>
<div class="t" style="left:431.88px;top:848px;font-size:9.3px;line-height:10px;color:#d95ee2;letter-spacing:-0.029px;">« pk »</div>
<div class="b" style="left:321.1px;top:860.0px;width:137.89999999999998px;height:1px;background:#68708d;"></div>
<svg style="left:0;top:0" width="1920" height="1010"><path d="M325.5 821.6 q0 -1.8 1.8 -1.8 h.5 q1.5 0 1.5 1.6 v.9 h4.7 v3.7 h-1.3 v-1.5 h-.9 v1.2 h-1.2 v-1.2 h-1.3 v1.4 q0 1.9 -1.6 1.9 h-.5 q-1.7 0 -1.7 -1.9z" fill="#ffef5c"/><circle cx="329.7" cy="837.7" r="3.4" fill="#86c3ff"/><path d="M325.1 852.5 l4.2 -3.5 l4.2 2.2 v5.6 h-5.6z" fill="#ffa877" stroke="#e88850" stroke-width=".4"/><path d="M371.4 866.8 l3.1 -3.1 l3.1 3.1 l-3.1 3.1z" fill="#5db2f7"/><path d="M384.2 870.0 h8.4 l-4.2 -6.8z" fill="#5db2f7"/><path d="M397.9 863.6 h7.8 l-3.9 6.4z" fill="#5d83b4"/></svg>
<svg style="left:0;top:0" width="1920" height="1010"><path d="M152.2 348.3 H193.5 L197.6 357.3 L193.5 366.4 H152.2Z" fill="#ffff80" stroke="#c45a28" stroke-width="1.1"/><rect x="438.4" y="601.9" width="32.1" height="17" fill="#ffff80" stroke="#a43a14" stroke-width="1.1"/></svg>
<div class="t" style="left:156.46px;top:353px;font-size:8.5px;line-height:10px;color:#111;font-style:italic;letter-spacing:-0.535px;">red_tables</div>
<div class="t" style="left:441.39px;top:606px;font-size:7.8px;line-height:9px;color:#111;letter-spacing:-0.065px;">SQL off</div>
<svg style="left:0;top:0" width="1920" height="1010"><path d="M101.2 57.2 H406.3 Q412.3 57.2 412.3 63.2 V124.30000000000001 L399.3 137.3 H101.2 Q95.2 137.3 95.2 131.3 V63.2 Q95.2 57.2 101.2 57.2Z" transform="translate(4.5,4.5)" fill="rgba(0,0,0,.2)"/><path d="M101.2 57.2 H406.3 Q412.3 57.2 412.3 63.2 V124.30000000000001 L399.3 137.3 H101.2 Q95.2 137.3 95.2 131.3 V63.2 Q95.2 57.2 101.2 57.2Z" fill="#e6e672"/><path d="M399.3 137.3 V124.30000000000001 H412.3" fill="#ebeb84" stroke="#f2f29a" stroke-width=".8"/></svg><div class="t" style="left:98.62px;top:61px;font-size:9.4px;line-height:11px;color:#16160c;letter-spacing:0.225px;-webkit-text-stroke:.1px #16160c;">[ demodb database ]</div><div class="t" style="left:98.62px;top:87px;font-size:9.4px;line-height:11px;color:#16160c;letter-spacing:0.184px;-webkit-text-stroke:.1px #16160c;">This database model demonstrate some features when designing</div><div class="t" style="left:98.62px;top:100px;font-size:9.4px;line-height:11px;color:#16160c;letter-spacing:0.146px;-webkit-text-stroke:.1px #16160c;">database models. It does not represent any specific context but can be</div><div class="t" style="left:98.62px;top:113px;font-size:9.4px;line-height:11px;color:#16160c;letter-spacing:0.136px;-webkit-text-stroke:.1px #16160c;">exported to the database since it generates well formed SQL syntax.</div>
<svg style="left:0;top:0" width="1920" height="1010"><path d="M223.4 192.1 H413.1 Q419.1 192.1 419.1 198.1 V238.8 L406.1 251.8 H223.4 Q217.4 251.8 217.4 245.8 V198.1 Q217.4 192.1 223.4 192.1Z" transform="translate(4.5,4.5)" fill="rgba(0,0,0,.2)"/><path d="M223.4 192.1 H413.1 Q419.1 192.1 419.1 198.1 V238.8 L406.1 251.8 H223.4 Q217.4 251.8 217.4 245.8 V198.1 Q217.4 192.1 223.4 192.1Z" fill="#e6e672"/><path d="M406.1 251.8 V238.8 H419.1" fill="#ebeb84" stroke="#f2f29a" stroke-width=".8"/></svg><div class="t" style="left:221.38px;top:196px;font-size:8.1px;line-height:9px;color:#16160c;letter-spacing:0.207px;-webkit-text-stroke:.1px #16160c;">Note the table below with a different color.</div><div class="t" style="left:221.38px;top:207px;font-size:8.1px;line-height:9px;color:#16160c;letter-spacing:0.239px;-webkit-text-stroke:.1px #16160c;">pgModeler implements the concept of "tags" in</div><div class="t" style="left:221.38px;top:218px;font-size:8.1px;line-height:9px;color:#16160c;letter-spacing:0.201px;-webkit-text-stroke:.1px #16160c;">order to permit user to graphically separate tables</div><div class="t" style="left:221.38px;top:229px;font-size:8.1px;line-height:9px;color:#16160c;letter-spacing:0.296px;-webkit-text-stroke:.1px #16160c;">through different colors.</div>
<svg style="left:0;top:0" width="1920" height="1010"><path d="M162.3 951.6 H448.3 Q454.3 951.6 454.3 957.6 V997 L441.3 1010 H162.3 Q156.3 1010 156.3 1004 V957.6 Q156.3 951.6 162.3 951.6Z" transform="translate(4.5,4.5)" fill="rgba(0,0,0,.2)"/><path d="M162.3 951.6 H448.3 Q454.3 951.6 454.3 957.6 V997 L441.3 1010 H162.3 Q156.3 1010 156.3 1004 V957.6 Q156.3 951.6 162.3 951.6Z" fill="#e6e672"/><path d="M441.3 1010 V997 H454.3" fill="#ebeb84" stroke="#f2f29a" stroke-width=".8"/></svg><div class="t" style="left:160.18px;top:956px;font-size:8.1px;line-height:9px;color:#16160c;letter-spacing:0.207px;-webkit-text-stroke:.1px #16160c;">pgModeler implements a mechanism called "column propagation" when using</div><div class="t" style="left:160.18px;top:967px;font-size:8.1px;line-height:9px;color:#16160c;letter-spacing:0.093px;-webkit-text-stroke:.1px #16160c;">relationships 1:1, 1:n and generalization.</div>
</div></div>
<div class="b" style="left:79px;top:972px;width:1484px;height:1px;background:#3a405a;"></div>
<div class="b" style="left:1549px;top:45px;width:13px;height:927px;background:#2b3045;border-left:1px solid #3a405a;border-right:2px solid #3a405a;"></div>
<div class="b" style="left:1550px;top:58px;width:10px;height:757px;background:#3a405a;"></div>
<div class="b" style="left:1550px;top:45px;width:10px;height:13px;background:#343a53;"></div>
<div class="b" style="left:1550px;top:959px;width:10px;height:13px;background:#343a53;"></div>
<svg style="left:1549px;top:45px" width="13" height="927"><path d="M2.2 9.5 L9.8 9.5 L6 4.2Z" fill="#e4e4e4"/><path d="M2.2 917.5 L9.8 917.5 L6 923Z" fill="#e4e4e4"/></svg>
<svg style="left:0;top:0" width="1920" height="42"><rect x="552.5" y="2.8" width="35.4" height="35.8" rx="4.5" fill="#1b73b5" stroke="#2190e2" stroke-width="1.1"/><rect x="594.5" y="2.8" width="35.4" height="35.8" rx="4.5" fill="#1b73b5" stroke="#2190e2" stroke-width="1.1"/><rect x="636.5" y="2.8" width="35.4" height="35.8" rx="4.5" fill="#1b73b5" stroke="#2190e2" stroke-width="1.1"/><path d="M336.7 3 V38" stroke="#2a2f43" stroke-width="1.2"/><path d="M464.5 3 V38" stroke="#2a2f43" stroke-width="1.2"/><path d="M843.7 3 V38" stroke="#2a2f43" stroke-width="1.2"/><path d="M1157.5 3 V38" stroke="#2a2f43" stroke-width="1.2"/><path d="M1285.7 3 V38" stroke="#2a2f43" stroke-width="1.2"/><g fill="#fafafa"><rect x="10" y="11.4" width="20.6" height="3.2" rx="1"/><rect x="10" y="18.4" width="20.6" height="3.2" rx="1"/><rect x="10" y="25.4" width="20.6" height="3.2" rx="1"/></g><g transform="translate(46,4)"><path d="M3.6 3.5 H19.200000000000003 L24.8 9.1 V29 H3.6Z" fill="#fff"/><polygon points="22.00,15.20 23.82,19.89 28.85,20.18 24.95,23.36 26.23,28.22 22.00,25.50 17.77,28.22 19.05,23.36 15.15,20.18 20.18,19.89" fill="#ffe64d" stroke="#c7a600" stroke-width=".9" stroke-linejoin="round"/></g><g transform="translate(88,4)"><rect x="8.4" y="3.5" width="14.6" height="10.5" fill="#fff"/><path d="M10.8 6.5 H20.6 M10.8 9.3 H19" stroke="#8a8a8a" stroke-width="1"/><path d="M4.4 10.4 h6 l2 2.2 h10.200000000000003 v4 h-18.200000000000003z" fill="#e8c93a"/><path d="M3.2 15.0 H25.8 L23.6 26.4 H5.4Z" fill="#ffe64d"/><circle cx="22.8" cy="22.4" r="5.9" fill="#4fd3f7" stroke="#1c9bd1" stroke-width="1"/><path d="M22.8 18.8 V22.6 H25.4" fill="none" stroke="#fff" stroke-width="1.2"/></g><g transform="translate(130,4)"><rect x="8.6" y="3.5" width="16.4" height="12.5" fill="#fff"/><path d="M11.0 6.5 H22.6 M11.0 9.3 H21" stroke="#8a8a8a" stroke-width="1"/><path d="M5 11.4 h6 l2 2.2 h13 v4 h-21z" fill="#e8c93a"/><path d="M3.8 16.0 H29.2 L27 28.4 H6Z" fill="#ffe64d"/></g><g transform="translate(172,4)"><path d="M8.4 8.7 H25.6 Q26.4 8.7 26.7 9.4 L29.2 19.4 H3.4 L6.9 9.4 Q7.4 8.7 8.4 8.7Z" fill="#e3e8ea"/><path d="M3.4 19.4 H29.2 V26.8 Q29.2 28.4 27.6 28.4 H5 Q3.4 28.4 3.4 26.8Z" fill="#dbe1e3"/><path d="M3.4 19.6 H29.2" stroke="#c3cbce" stroke-width=".8"/><path d="M6.8 25.5 H25.8" stroke="#7d8a8e" stroke-width="1"/><rect x="25" y="22.6" width="1" height="1.6" fill="#7d8a8e"/><path d="M14.700000000000001 4 h4.2 v8 h4.4 l-6.5 5.2 l-6.5 -5.2 h4.4z" fill="#4fd3f7"/></g><g transform="translate(214,4)"><path d="M8.4 8.7 H25.6 Q26.4 8.7 26.7 9.4 L29.2 19.4 H3.4 L6.9 9.4 Q7.4 8.7 8.4 8.7Z" fill="#e3e8ea"/><path d="M3.4 19.4 H29.2 V26.8 Q29.2 28.4 27.6 28.4 H5 Q3.4 28.4 3.4 26.8Z" fill="#dbe1e3"/><path d="M3.4 19.6 H29.2" stroke="#c3cbce" stroke-width=".8"/><path d="M6.8 25.5 H25.8" stroke="#7d8a8e" stroke-width="1"/><rect x="25" y="22.6" width="1" height="1.6" fill="#7d8a8e"/><rect x="5.6" y="21.6" width="9.6" height="4.6" fill="#4fd3f7"/><path d="M16.2 21.2 v5.8" stroke="#9aa6aa" stroke-width=".8"/><path d="M14.700000000000001 4 h4.2 v8 h4.4 l-6.5 5.2 l-6.5 -5.2 h4.4z" fill="#62d962"/></g><g transform="translate(256,4)"><g transform="translate(.6,.2) scale(.8)"><path d="M8.4 8.7 H25.6 Q26.4 8.7 26.7 9.4 L29.2 19.4 H3.4 L6.9 9.4 Q7.4 8.7 8.4 8.7Z" fill="#e3e8ea"/><path d="M3.4 19.4 H29.2 V26.8 Q29.2 28.4 27.6 28.4 H5 Q3.4 28.4 3.4 26.8Z" fill="#dbe1e3"/><path d="M3.4 19.6 H29.2" stroke="#c3cbce" stroke-width=".8"/><path d="M6.8 25.5 H25.8" stroke="#7d8a8e" stroke-width="1"/><rect x="25" y="22.6" width="1" height="1.6" fill="#7d8a8e"/><rect x="5.6" y="21.6" width="9.6" height="4.6" fill="#4fd3f7"/><path d="M16.2 21.2 v5.8" stroke="#9aa6aa" stroke-width=".8"/></g><g transform="translate(.1,-.2) scale(.92)"><path d="M13.4 4 h4.2 v8 h4.4 l-6.5 5.2 l-6.5 -5.2 h4.4z" fill="#c871ea"/></g><path d="M20.6 16.2 h5.6 l2.8 2.8 v8 h-8.4z" fill="#d8d8d8" stroke="#b0b0b0" stroke-width=".5"/><path d="M18 18.4 h5.6 l2.8 2.8 v7.6 h-8.4z" fill="#fff" stroke="#c8c8c8" stroke-width=".5"/></g><g transform="translate(298,4)"><path d="M10 9.6 V3.6 H19 L22 6.4 V9.6Z" fill="#fff"/><rect x="4.4" y="9.6" width="23.4" height="12.8" rx="2" fill="#dcdcdc"/><rect x="4.4" y="9.6" width="23.4" height="4" rx="2" fill="#efefef"/><circle cx="24.6" cy="14.6" r=".9" fill="#777"/><circle cx="24.6" cy="17.6" r=".9" fill="#777"/><path d="M8.6 17.6 H23.6 L24.6 29 H7.6Z" fill="#fff" stroke="#8a8a8a" stroke-width=".6"/><path d="M10.4 21.4 H21.8 M10 24.6 H22.2" stroke="#777" stroke-width="1.1"/></g><g transform="translate(341,4)"><path d="M19.6 18.8 L29 28.6" stroke="#2c7482" stroke-width="1.15" stroke-linecap="round"/><circle cx="13.3" cy="12.4" r="8.7" fill="#c9f5fb" stroke="#6bbcc8" stroke-width=".8"/><path d="M8.8 12.4 H17.8" stroke="#2f8794" stroke-width="1.05"/></g><g transform="translate(383,4)"><path d="M19.6 18.8 L29 28.6" stroke="#2c7482" stroke-width="1.15" stroke-linecap="round"/><circle cx="13.3" cy="12.4" r="8.7" fill="#c9f5fb" stroke="#6bbcc8" stroke-width=".8"/><text x="7.2" y="15.4" font-family="Liberation Sans" font-weight="bold" font-size="8.6" fill="#5aa7b2" letter-spacing="-.3">1:1</text></g><g transform="translate(425,4)"><path d="M19.6 18.8 L29 28.6" stroke="#2c7482" stroke-width="1.15" stroke-linecap="round"/><circle cx="13.3" cy="12.4" r="8.7" fill="#c9f5fb" stroke="#6bbcc8" stroke-width=".8"/><path d="M8.8 12.4 H17.8 M13.3 7.9 V16.9" stroke="#2f8794" stroke-width="1.05"/></g><g transform="translate(468,4)"><path d="M19.6 18.8 L29 28.6" stroke="#2c7482" stroke-width="1.15" stroke-linecap="round"/><circle cx="13.3" cy="12.4" r="8.7" fill="#c9f5fb" stroke="#6bbcc8" stroke-width=".8"/><rect x="10.4" y="10.8" width="5.6" height="6" fill="#4fd3f7"/><path d="M13.4 17.6 l3.4 -9.6 l3.4 9.6z" fill="#62d962" stroke="#36a94a" stroke-width=".5"/><circle cx="10" cy="9.4" r="3" fill="#f24b4b" stroke="#c22" stroke-width=".5"/></g><g transform="translate(511,4)"><path d="M12 4.2 h2.5 q.7 0 .7 .7 V21.6 H4.6 Q7.4 11.4 12 4.2z" fill="#e8eced"/><path d="M21.4 4.2 h-2.5 q-.7 0 -.7 .7 V21.6 H28.8 Q26 11.4 21.4 4.2z" fill="#e8eced"/><path d="M12.2 13 q4.6 -3.6 9.2 0" fill="none" stroke="#5c6b70" stroke-width=".9"/><rect x="15.2" y="4" width="3" height="18" fill="#151b25"/><circle cx="9.4" cy="22.2" r="5.6" fill="#c9f5fb" stroke="#5f9aa6" stroke-width=".7"/><circle cx="23.9" cy="22.2" r="5.6" fill="#c9f5fb" stroke="#5f9aa6" stroke-width=".7"/></g><rect x="557" y="7.6" width="25.4" height="25.4" rx="2.4" fill="#fff" stroke="#cfc6c0" stroke-width=".7"/><path d="M565.5 7.6 v25.4 M573.9 7.6 v25.4 M557 16.1 h25.4 M557 24.5 h25.4" stroke="#8f8f8f" stroke-width="1"/><rect x="599.8" y="8" width="21.8" height="21.8" rx="2.4" fill="#fff" stroke="#cfc6c0" stroke-width=".7"/><path d="M607.1 8 v21.8 M614.3 8 v21.8 M599.8 15.3 h21.8 M599.8 22.5 h21.8" stroke="#8f8f8f" stroke-width="1"/><path d="M624.4 8 V29 Q624.4 32.6 620.8 32.6 H598.8" fill="none" stroke="#5fe0f8" stroke-width="1.3" stroke-dasharray="1.9 1.5"/><path d="M666.4 8 V29 Q666.4 32.6 662.8 32.6 H641.4" fill="none" stroke="#5fe0f8" stroke-width="1.3" stroke-dasharray="1.9 1.5"/><path d="M662 12.4 L647.4 27" stroke="#fff" stroke-width="2.6"/><path d="M643.8 29.8 L645.2 22.6 L651.2 28.6Z" fill="#fff" stroke="#ddd" stroke-width=".5"/><path d="M647.4 13.6 v-1.6 a2.7 2.7 0 0 1 5.4 0 v1.6" fill="none" stroke="#b8b8b8" stroke-width="1.1"/><rect x="645.2" y="13.4" width="9.8" height="6.4" rx=".8" fill="#ffe64d" stroke="#c7a600" stroke-width=".6"/><circle cx="650.1" cy="16.4" r=".9" fill="#8a7a30"/><rect x="682.6" y="7.6" width="21" height="18.8" rx="1.6" fill="#fff" stroke="#cfc6c0" stroke-width=".7"/><path d="M689.6 7.6 v18.8 M696.6 7.6 v18.8 M682.6 13.9 h21 M682.6 20.1 h21" stroke="#8f8f8f" stroke-width="1"/><path d="M696.4 19.6 v6.4 a6 6 0 0 0 12 0 v-6.4 h-3.6 v6.2 a2.4 2.4 0 0 1 -4.8 0 v-6.2z" fill="#f24b4b"/><rect x="696.4" y="19.6" width="3.6" height="3.4" fill="#f4f4f4" stroke="#999" stroke-width=".5"/><rect x="704.8" y="19.6" width="3.6" height="3.4" fill="#f4f4f4" stroke="#999" stroke-width=".5"/><rect x="728" y="11.4" width="19.6" height="17.4" rx="1.5" fill="#fff" stroke="#d0d0d0" stroke-width=".6"/><circle cx="733.5" cy="18.4" r="4.0" fill="#f24b4b"/><rect x="733.9" y="20.1" width="5.9" height="5.7" fill="#4fd3f7"/><path d="M738.2 25.7 l3.3 -10.4 l3.3 10.4z" fill="#62d962"/><g fill="#f2f2f2"><path d="M724.6 7.6 h4.6 l-4.6 4.6z"/><path d="M751 7.6 h-4.6 l4.6 4.6z"/><path d="M724.6 32.6 h4.6 l-4.6 -4.6z"/><path d="M751 32.6 h-4.6 l4.6 -4.6z"/></g><path d="M769.4 16.4 V29.4 H782.6 M773.2 16.4 V20.2 H788 V16.4" fill="none" stroke="#9aa2aa" stroke-width=".9"/><circle cx="779.7" cy="20.2" r="1.4" fill="#e0e0e0"/><circle cx="776" cy="29.4" r="1.4" fill="#e0e0e0"/><rect x="766.8" y="7.6" width="10.4" height="8.8" fill="#fff"/><rect x="766.8" y="7.6" width="10.4" height="2.6" fill="#4fd3f7"/><rect x="782.6" y="7.6" width="10.4" height="8.8" fill="#fff"/><rect x="782.6" y="7.6" width="10.4" height="2.6" fill="#4fd3f7"/><rect x="782.6" y="23.8" width="10.4" height="8.8" fill="#fff"/><rect x="782.6" y="23.8" width="10.4" height="2.6" fill="#4fd3f7"/><rect x="812.6" y="8" width="22" height="21.6" fill="#4fd3f7"/><rect x="808.8" y="22" width="11.2" height="10.6" fill="#b9edf9" stroke="#7fdcf3" stroke-width=".9" stroke-dasharray="1.6 1.2"/><path d="M831.6 11.2 L822.8 19.4 M822.6 14.2 V19.6 H828.2" fill="none" stroke="#2a7a8a" stroke-width="1"/><path d="M855 20 L876.2 7.2 V32.8Z" fill="#4fd3f7" stroke="#4fd3f7" stroke-width="1" stroke-linejoin="round"/><path d="M922 20 L900.2 7.2 V32.8Z" fill="#494d5b" stroke="#494d5b" stroke-width="1" stroke-linejoin="round"/><rect x="936.2" y="7" width="175.2" height="26" rx="4" fill="#394059"/><g transform="translate(940.2,8.4) scale(.62)"><path d="M8.4 8.7 H25.6 Q26.4 8.7 26.7 9.4 L29.2 19.4 H3.4 L6.9 9.4 Q7.4 8.7 8.4 8.7Z" fill="#e3e8ea"/><path d="M3.4 19.4 H29.2 V26.8 Q29.2 28.4 27.6 28.4 H5 Q3.4 28.4 3.4 26.8Z" fill="#dbe1e3"/><path d="M3.4 19.6 H29.2" stroke="#c3cbce" stroke-width=".8"/><path d="M6.8 25.5 H25.8" stroke="#7d8a8e" stroke-width="1"/><rect x="25" y="22.6" width="1" height="1.6" fill="#7d8a8e"/><path d="M14.700000000000001 4 h4.2 v8 h4.4 l-6.5 5.2 l-6.5 -5.2 h4.4z" fill="#4fd3f7"/></g><path d="M1096.6 17.4 h9 l-4.5 5.4z" fill="#ececec"/><g transform="translate(1118,4)"><path d="M4.8 3.5 H20.200000000000003 L25.8 9.1 V29 H4.8Z" fill="#fff"/><circle cx="23.6" cy="22.2" r="6.6" fill="#f24b4b" stroke="#c81e1e" stroke-width=".8"/><path d="M21 19.6 l5.2 5.2 M26.2 19.6 l-5.2 5.2" stroke="#a81818" stroke-width="1"/></g><g transform="translate(1162,4)"><g transform="translate(5.2,3.3) scale(0.78)"><path d="M21.9 19 C21.9 26 22.6 30.6 27.6 30.6 C30.4 30.6 31.8 29.2 32.4 27.4" fill="none" stroke="#e4e4e4" stroke-width="3.7" stroke-linecap="round"/><path d="M.4 8.1 C.6 3.5 3.8 .8 7.9 .6 C9.6 .6 10.4 1.4 11 2.5 C13 1.4 15 1.4 17 1.8 C20.6 2.4 23.2 5 23.7 10 L23.9 19 L19.9 21 L19.8 23.6 C16 23.6 12.4 22.6 10.8 20 L10.6 16.6 C9 16.4 7.4 18 5.4 18.5 C3 18.2 .6 13 .4 8.1Z" fill="#e4e4e4"/><path d="M4.2 7.4 C5.4 5.6 6.8 4.6 8 4.5 C9 4.4 9.3 5 9.4 6 L9.6 11.6" fill="none" stroke="#707070" stroke-width="1"/><path d="M15.9 10.3 l.8 -.8 l.8 .8 l-.8 .8z" fill="#666"/><path d="M14.5 19.4 Q20 18.6 22 16.2 Q25 18.6 27.8 19.7 Q22 23 14.5 19.4Z" fill="#fff"/><path d="M16.4 15.6 Q19 17.8 22.6 18.6" fill="none" stroke="#8a8a8a" stroke-width=".8"/><path d="M14.5 19.4 Q18.6 21.8 23.4 21.4" fill="none" stroke="#9a9a9a" stroke-width=".7"/></g><circle cx="10.4" cy="23.6" r="5.5" fill="#4fd3f7" stroke="#1c9bd1" stroke-width="1"/><path d="M7.8 22.8 a2.8 2.8 0 0 1 5 -1 M13 24.4 a2.8 2.8 0 0 1 -5 1" fill="none" stroke="#bff0fc" stroke-width="1"/></g><g transform="translate(1205,4)"><path d="M9.4 9.6 H21" stroke="#a8b0b8" stroke-width="1"/><path d="M9.4 13 V18" stroke="#a8b0b8" stroke-width="1"/><circle cx="13.6" cy="9.6" r="1.2" fill="#ddd"/><path d="M7.2 6 v-1.2 a2.2 2.2 0 0 1 4.4 0 v1.2" fill="none" stroke="#c8c8c8" stroke-width="1"/><rect x="5.4" y="6" width="8" height="6.4" rx=".8" fill="#ffe64d" stroke="#c7a600" stroke-width=".5"/><path d="M8 9.2 h2.8 M9.4 7.8 v2.8" stroke="#8a7a30" stroke-width=".8"/><path d="M20.6 5.224 v7.752000000000001 a4.8 1.824 0 0 0 9.6 0 v-7.752000000000001z" fill="#ececec"/><path d="M20.6 7.8 a4.8 1.824 0 0 0 9.6 0" fill="none" stroke="#bdbdbd" stroke-width="1"/><path d="M20.6 10.4 a4.8 1.824 0 0 0 9.6 0" fill="none" stroke="#bdbdbd" stroke-width="1"/><ellipse cx="25.400000000000002" cy="5.224" rx="4.8" ry="1.824" fill="#f6f6f6" stroke="#bdbdbd" stroke-width=".7"/><rect x="4.6" y="18" width="11" height="8.2" rx="1" fill="#e8e8e8"/><rect x="5.8" y="19.2" width="8.6" height="5" fill="#b8eafa"/><path d="M10.1 26.2 v2.4 M6.8 29.2 h6.6" stroke="#d8d8d8" stroke-width="1.4"/><path d="M18.6 18.4 L30.4 24 L18.6 29.6Z" fill="#62d962"/></g><g transform="translate(1247,4)"><g transform="translate(.4,-.8) scale(.94,.86)"><path d="M3.4 3.6 h5 a2 2 0 1 1 4 0 h4.4 v5 a2 2 0 1 0 0 4 v3.6 h-13.4z" fill="#6fe06f"/><path d="M16.8 3.6 h3.6 a2 2 0 1 1 4 0 h4.2 v12.6 h-5 a2 2 0 1 0 -4 0 h-2.8 v-3.6 a2 2 0 1 0 0 -4z" fill="#ffe64d"/><path d="M3.4 16.2 h4 a2 2 0 1 1 4 0 h5.4 v4 a2 2 0 1 0 0 4 v4.4 h-13.4 v-4.6 a2 2 0 1 1 0 -4z" fill="#f24b4b"/><path d="M16.8 16.2 h2.8 a2 2 0 1 1 4 0 h5 v12.4 h-11.8 v-4.4 a2 2 0 1 1 0 -4z" fill="#4fd3f7"/></g><path d="M24.6 17.4 L15.6 26.6" stroke="#6f8086" stroke-width="2.8" stroke-linecap="round"/><path d="M24.6 17.4 L15.6 26.6" stroke="#dbe6ea" stroke-width="1.6" stroke-linecap="round"/><circle cx="26.4" cy="15.4" r="2.5" fill="none" stroke="#dbe6ea" stroke-width="1.9"/><path d="M26.8 15 L30 12.6" stroke="#4fd3f7" stroke-width="1.6"/><circle cx="14.4" cy="27.8" r="1.9" fill="none" stroke="#dbe6ea" stroke-width="1.3"/></g><g transform="translate(1291,4)"><path d="M12.4 3.6 L14 8 M19.6 3.6 L18 8" stroke="#d8d8d8" stroke-width="1"/><path d="M4.6 11.6 L10 14.6 M27.4 11.6 L22 14.6 M3.6 19 H10 M28.4 19 H22 M4.8 27 L10 23.4 M27.2 27 L22 23.4" stroke="#d8d8d8" stroke-width="1.1" fill="none"/><path d="M11.6 9.4 q4.4 -4.4 8.8 0z" fill="#f2f2f2"/><path d="M10 11 h12 q1.4 9.6 -6 18.4 q-7.4 -8.8 -6 -18.4z" fill="#e4e4e4"/><path d="M16 11 V29" stroke="#c4c4c4" stroke-width=".7"/></g><g transform="translate(1333,4)"><circle cx="19.6" cy="11" r="7.6" fill="#ffe64d" stroke="#d8bc00" stroke-width=".6"/><text x="16.4" y="15.2" font-size="11.6" font-family="Liberation Sans" fill="#7a6a10">$</text><path d="M3 23.6 q4 -3.4 8 -1.6 l5 .6 q2.4 .4 2 2 l7 -3 q2.6 -.6 3 1.4 q-6 4.6 -11 6 q-5 .6 -9.4 -.4 l-4.6 .8z" fill="#c47a52"/></g><g transform="translate(1375,4)"><circle cx="16.2" cy="16.2" r="9.5" fill="none" stroke="#fafafa" stroke-width="7"/><circle cx="16.2" cy="16.2" r="9.5" fill="none" stroke="#f24b4b" stroke-width="6" stroke-dasharray="4.4 10.52" stroke-dashoffset="-5.26"/></g><g transform="translate(1417,4)"><g transform="translate(3.9,2.7) scale(0.78)"><path d="M21.9 19 C21.9 26 22.6 30.6 27.6 30.6 C30.4 30.6 31.8 29.2 32.4 27.4" fill="none" stroke="#e4e4e4" stroke-width="3.7" stroke-linecap="round"/><path d="M.4 8.1 C.6 3.5 3.8 .8 7.9 .6 C9.6 .6 10.4 1.4 11 2.5 C13 1.4 15 1.4 17 1.8 C20.6 2.4 23.2 5 23.7 10 L23.9 19 L19.9 21 L19.8 23.6 C16 23.6 12.4 22.6 10.8 20 L10.6 16.6 C9 16.4 7.4 18 5.4 18.5 C3 18.2 .6 13 .4 8.1Z" fill="#e4e4e4"/><path d="M4.2 7.4 C5.4 5.6 6.8 4.6 8 4.5 C9 4.4 9.3 5 9.4 6 L9.6 11.6" fill="none" stroke="#707070" stroke-width="1"/><path d="M15.9 10.3 l.8 -.8 l.8 .8 l-.8 .8z" fill="#666"/><path d="M14.5 19.4 Q20 18.6 22 16.2 Q25 18.6 27.8 19.7 Q22 23 14.5 19.4Z" fill="#fff"/><path d="M16.4 15.6 Q19 17.8 22.6 18.6" fill="none" stroke="#8a8a8a" stroke-width=".8"/><path d="M14.5 19.4 Q18.6 21.8 23.4 21.4" fill="none" stroke="#9a9a9a" stroke-width=".7"/></g><circle cx="9" cy="23.3" r="6" fill="#ffb43c" stroke="#e09010" stroke-width=".8"/><text x="6.3" y="27" font-size="9.6" font-family="Liberation Sans" font-weight="bold" fill="#d89010">?</text></g><g transform="translate(1459,4)"><rect x="3.5" y="5.6" width="25.6" height="20" rx=".8" fill="#fafafa"/><path d="M7.6 3.2 h8.2 v9.4 l-4.1 -3 l-4.1 3z" fill="#a9e6f9" stroke="#4fb8dc" stroke-width=".7"/><path d="M17.6 9.6 H26 M17.6 13.2 H26" stroke="#a0a0a0" stroke-width="1.1"/><circle cx="9.4" cy="19" r="3.1" fill="#ffe64d" stroke="#c7a600" stroke-width=".9"/><circle cx="8.6" cy="19" r=".8" fill="#b89a00"/><path d="M12.4 18.6 H21 V21 M18 18.6 V20.6" stroke="#e0c020" stroke-width="1.6" fill="none"/><path d="M23 17.4 L29.6 28.8 H16.4Z" fill="#ffe64d" stroke="#e0c820" stroke-width=".8" stroke-linejoin="round"/><path d="M23 21.4 V25.2 M23 26.4 V27.6" stroke="#8a7a10" stroke-width="1.2"/></g></svg><div class="t" style="left:961.81px;top:13px;font-size:14.67px;line-height:16px;color:#e6e9f2;letter-spacing:0.413px;">demodb</div>
<div class="b" style="left:1px;top:109px;width:79px;height:64.4px;background:#2b3045;border:1px solid #3a405a;border-right:none;border-radius:6px 0 0 6px;"></div>
<div class="b" style="left:0px;top:576px;width:79px;height:1px;background:#2b3045;"></div>
<div class="t" style="left:12.73px;top:85px;font-size:13px;line-height:15px;color:#e6e9f2;letter-spacing:0.033px;">Welcome</div>
<div class="t" style="left:19.73px;top:152px;font-size:13px;line-height:15px;color:#e6e9f2;letter-spacing:-0.065px;">Design</div>
<div class="t" style="left:16.18px;top:218px;font-size:13px;line-height:15px;color:#e6e9f2;letter-spacing:0.053px;">Manage</div>
<div class="t" style="left:19.68px;top:284px;font-size:13px;line-height:15px;color:#e6e9f2;letter-spacing:0.680px;">Import</div>
<div class="t" style="left:20.73px;top:351px;font-size:13px;line-height:15px;color:#e6e9f2;letter-spacing:0.114px;">Export</div>
<div class="t" style="left:29.78px;top:417px;font-size:13px;line-height:15px;color:#e6e9f2;letter-spacing:0.259px;">Diff</div>
<div class="t" style="left:32.18px;top:484px;font-size:13px;line-height:15px;color:#e6e9f2;letter-spacing:-1.044px;">Fix</div>
<div class="t" style="left:11.08px;top:550px;font-size:13px;line-height:15px;color:#e6e9f2;letter-spacing:0.135px;">Configure</div>
<div class="t" style="left:27.08px;top:624px;font-size:13px;line-height:15px;color:#e6e9f2;letter-spacing:-0.283px;">New</div>
<div class="t" style="left:23.03px;top:690px;font-size:13px;line-height:15px;color:#e6e9f2;letter-spacing:0.078px;">Quick</div>
<div class="t" style="left:10.08px;top:757px;font-size:13px;line-height:15px;color:#e6e9f2;letter-spacing:0.022px;">Properties</div>
<div class="t" style="left:20.03px;top:823px;font-size:13px;line-height:15px;color:#e6e9f2;letter-spacing:-0.330px;">Source</div>
<div class="t" style="left:24.53px;top:890px;font-size:13px;line-height:15px;color:#e6e9f2;letter-spacing:0.308px;">More</div>
<svg style="left:0;top:0" width="80" height="1010"><path d="M69 609.4 V616.6 L73.6 613Z" fill="#ececec"/><path d="M69 676.0 V683.2 L73.6 679.6Z" fill="#ececec"/><path d="M69 875.4 V882.6 L73.6 879Z" fill="#ececec"/><g transform="translate(23,48) scale(1)"><path d="M.4 8.1 C.6 3.5 3.8 .8 7.9 .6 C9.6 .6 10.4 1.4 11 2.5 C13 1.4 15 1.4 17 1.8 C20.6 2.4 23.2 5 23.7 10 L23.9 32.4 L20.2 32.4 L19.8 24 C16 23.6 12.4 22.6 10.8 20 L10.6 16.6 C9 16.4 7.4 18 5.4 18.5 C3 18.2 .6 13 .4 8.1Z" fill="#e4e4e4"/><path d="M4.2 7.4 C5.4 5.6 6.8 4.6 8 4.5 C9 4.4 9.3 5 9.4 6 L9.6 11.6" fill="none" stroke="#707070" stroke-width="1"/><path d="M15.9 10.3 l.8 -.8 l.8 .8 l-.8 .8z" fill="#666"/><path d="M14.5 19.4 Q20 18.6 22 16.2 Q25 18.6 27.8 19.7 Q22 23 14.5 19.4Z" fill="#fff"/><path d="M16.4 15.6 Q19 17.8 22.6 18.6" fill="none" stroke="#8a8a8a" stroke-width=".8"/><path d="M14.5 19.4 Q18.6 21.8 23.4 21.4" fill="none" stroke="#9a9a9a" stroke-width=".7"/></g><rect x="23.8" y="72.7" width="8.1" height="8.1" rx="1.4" fill="#4fd3f7"/><rect x="35.5" y="72.7" width="8.1" height="8.1" rx="1.4" fill="#d884ff"/><rect x="47.7" y="72.7" width="8.1" height="8.1" rx="1.4" fill="#7be87b"/><path d="M23.6 115.2 H56 V139.6 L47.8 147.8 H23.6Z" fill="#fff" stroke="#9a9a9a" stroke-width=".5"/><path d="M23.6 115.2 H56 V122.4 H30.6 V147.8 H23.6Z" fill="#e6e6e6"/><rect x="23.6" y="115.2" width="6.8" height="7" fill="#858585"/><path d="M30.5 115.2 V147.8 M23.6 122.5 H56" stroke="#767676" stroke-width="1"/><path d="M34.6 117.6 v4.6 M40.4 119.2 v3 M46 119.2 v3 M51.6 117.6 v4.6 M26.2 126.6 h4 M27.6 132 h2.6 M27.2 137.6 h3 M26.2 143.2 h4" stroke="#6e6e6e" stroke-width="1"/><path d="M47.8 147.8 V139.6 H56Z" fill="#dedede" stroke="#8a8a8a" stroke-width=".6"/><g transform="translate(33.8,125.4) scale(0.96)"><rect x="0" y="0" width="9" height="8.6" fill="#4fd3f7" stroke="#1c7fa0" stroke-width=".7"/><circle cx="16.6" cy="4.4" r="4.6" fill="#62d962" stroke="#2f9d3a" stroke-width=".7"/><path d="M4.4 10.4 l4 5 l-4 5 l-4 -5z" fill="#f24b4b" stroke="#b02020" stroke-width=".7"/><path d="M10.6 19.6 l3.4 -7.4 l2.6 -1.2 l-1.4 2.8 l-1.4 5.4z" fill="#ffe64d" stroke="#c7a600" stroke-width=".6"/></g><path d="M24.5 187.6 v18.2 a13.5 5.6 0 0 0 27 0 v-18.2z" fill="#e4e4e4" stroke="#a0a0a0" stroke-width=".6"/><path d="M24.5 193.6 q3.4 3.6 12 4.6 M24.5 199.8 q3.4 3.6 11.4 4.6" fill="none" stroke="#8c8c8c" stroke-width="1"/><ellipse cx="38" cy="187.6" rx="13.5" ry="5.6" fill="#e6e6e6" stroke="#8c8c8c" stroke-width="1"/><path d="M44.6 207.8 L53.6 198.6" stroke="#6f8086" stroke-width="1.2"/><path d="M52.8 199.4 L54.2 198" stroke="#cfe0e4" stroke-width="1.8" stroke-linecap="round"/><path d="M39.2 213 L44.4 208" stroke="#e64848" stroke-width="3" stroke-linecap="butt"/><path d="M42 201 L51.4 210" stroke="#5e6f75" stroke-width="3"/><path d="M42 201 L51.4 210" stroke="#cfe0e4" stroke-width="1.7"/><circle cx="41" cy="200" r="2.1" fill="none" stroke="#5e6f75" stroke-width="2.6"/><circle cx="41" cy="200" r="2.1" fill="none" stroke="#cfe0e4" stroke-width="1.5"/><path d="M41 200 L38.4 197.6" stroke="#e4e4e4" stroke-width="1.6"/><circle cx="52.2" cy="210.8" r="2.3" fill="none" stroke="#cfe0e4" stroke-width="1.7"/><path d="M52.2 210.8 L55 213.6" stroke="#151b25" stroke-width="1.8"/><path d="M23.4 250.56 v10.879999999999999 a7.5 2.56 0 0 0 15 0 v-10.879999999999999z" fill="#ececec"/><path d="M23.4 254.2 a7.5 2.56 0 0 0 15 0" fill="none" stroke="#bdbdbd" stroke-width="1"/><path d="M23.4 257.8 a7.5 2.56 0 0 0 15 0" fill="none" stroke="#bdbdbd" stroke-width="1"/><ellipse cx="30.9" cy="250.56" rx="7.5" ry="2.56" fill="#f6f6f6" stroke="#bdbdbd" stroke-width=".7"/><path d="M40.6 249.2 h11 v6.6 h3.4 l-5 6.6 l-5 -6.6 h3.4 v-3.4 h-7.8z" fill="#4fd3f7"/><rect x="38.4" y="264.6" width="17.6" height="15" rx="1.5" fill="#fff" stroke="#d0d0d0" stroke-width=".6"/><circle cx="43.3" cy="270.6" r="3.5" fill="#f24b4b"/><rect x="43.7" y="272.1" width="5.3" height="5.0" fill="#4fd3f7"/><path d="M47.6 276.9 l3.0 -9.0 l3.0 9.0z" fill="#62d962"/><rect x="23.4" y="314.6" width="17.6" height="14.6" rx="1.5" fill="#fff" stroke="#d0d0d0" stroke-width=".6"/><circle cx="28.3" cy="320.4" r="3.4" fill="#f24b4b"/><rect x="28.7" y="321.9" width="5.3" height="4.8" fill="#4fd3f7"/><path d="M32.6 326.6 l3.0 -8.8 l3.0 8.8z" fill="#62d962"/><path d="M43.8 315.4 h10.6 v6.8 h3.2 l-4.9 6.6 l-4.9 -6.6 h3.4 v-3.6 h-7.4z" fill="#62d962"/><path d="M40.4 333.056 v11.288 a7.8 2.656 0 0 0 15.6 0 v-11.288z" fill="#ececec"/><path d="M40.4 336.8 a7.8 2.656 0 0 0 15.6 0" fill="none" stroke="#bdbdbd" stroke-width="1"/><path d="M40.4 340.6 a7.8 2.656 0 0 0 15.6 0" fill="none" stroke="#bdbdbd" stroke-width="1"/><ellipse cx="48.199999999999996" cy="333.056" rx="7.8" ry="2.656" fill="#f6f6f6" stroke="#bdbdbd" stroke-width=".7"/><rect x="23.4" y="381" width="17.6" height="14.6" rx="1.5" fill="#fff" stroke="#d0d0d0" stroke-width=".6"/><circle cx="28.3" cy="386.8" r="3.4" fill="#f24b4b"/><rect x="28.7" y="388.3" width="5.3" height="4.8" fill="#4fd3f7"/><path d="M32.6 393.0 l3.0 -8.8 l3.0 8.8z" fill="#62d962"/><path d="M43.8 381.8 h10.6 v6.8 h3.2 l-4.9 6.6 l-4.9 -6.6 h3.4 v-3.6 h-7.4z" fill="#62d962"/><path d="M40.4 399.656 v11.288 a7.8 2.656 0 0 0 15.6 0 v-11.288z" fill="#ececec"/><path d="M40.4 403.4 a7.8 2.656 0 0 0 15.6 0" fill="none" stroke="#bdbdbd" stroke-width="1"/><path d="M40.4 407.2 a7.8 2.656 0 0 0 15.6 0" fill="none" stroke="#bdbdbd" stroke-width="1"/><ellipse cx="48.199999999999996" cy="399.656" rx="7.8" ry="2.656" fill="#f6f6f6" stroke="#bdbdbd" stroke-width=".7"/><path d="M23.8 399.2 h3.2 v7.6 h6.4 v-3.2 l5 4.8 l-5 4.8 v-3.2 h-9.6z" fill="#f24b4b"/><path d="M29 452.4 L52.6 476.4" stroke="#dfe8ea" stroke-width="3.4" stroke-linecap="round"/><circle cx="28.6" cy="452" r="4.6" fill="#dfe8ea"/><circle cx="52.8" cy="476.6" r="4.6" fill="#dfe8ea"/><path d="M23.6 448 l6 2.6 l-1.6 -6.2z M57.8 481.4 l-6 -3 l1.6 6.2z" fill="#151b25"/><path d="M54 449.6 L37 466.6" stroke="#3c4048" stroke-width="1.8"/><path d="M55.6 448 l-2.8 1 l1.8 1.8z" fill="#eee"/><rect x="52.6" y="447.6" width="3.4" height="3.4" fill="#e4e4e4" transform="rotate(45 54.3 449.3)"/><path d="M37.4 466.4 L25.6 478.4" stroke="#ee4444" stroke-width="4.4" stroke-linecap="round"/><rect x="23.4" y="514" width="33" height="33" rx="1.6" fill="#e4e4e4" stroke="#c8c8c8" stroke-width=".8"/><path d="M30.6 518.6 V537 M40 518.6 V537 M49.4 518.6 V537" stroke="#555" stroke-width="1.1"/><rect x="27.6" y="527" width="6" height="3" rx="1" fill="#ffe64d" stroke="#a88c00" stroke-width=".6"/><rect x="37" y="521.6" width="6" height="3" rx="1" fill="#ffe64d" stroke="#a88c00" stroke-width=".6"/><rect x="46.4" y="529.6" width="6" height="3" rx="1" fill="#ffe64d" stroke="#a88c00" stroke-width=".6"/><circle cx="30.6" cy="541.4" r="2.2" fill="#f24b4b"/><circle cx="40" cy="541.4" r="2.2" fill="#62d962"/><circle cx="49.4" cy="541.4" r="2.2" fill="#f24b4b"/><rect x="23.4" y="587" width="27" height="27" rx="1.6" fill="#ececec"/><g transform="translate(25.6,589.4) scale(0.98)"><rect x="0" y="0" width="9" height="8.6" fill="#4fd3f7" stroke="#1c7fa0" stroke-width=".7"/><circle cx="16.6" cy="4.4" r="4.6" fill="#62d962" stroke="#2f9d3a" stroke-width=".7"/><path d="M4.4 10.4 l4 5 l-4 5 l-4 -5z" fill="#f24b4b" stroke="#b02020" stroke-width=".7"/><path d="M10.6 19.6 l3.4 -7.4 l2.6 -1.2 l-1.4 2.8 l-1.4 5.4z" fill="#ffe64d" stroke="#c7a600" stroke-width=".6"/></g><circle cx="48" cy="612" r="7.4" fill="#62d962" stroke="#2f9d3a" stroke-width=".8"/><path d="M43.6 612 h8.8 M48 607.6 v8.8" stroke="#f0fff0" stroke-width="1.3"/><polygon points="52.3,667.2 52.6,670.0 48.4,672.1 47.8,674.1 50.1,678.1 48.3,680.3 43.9,678.8 42.1,679.8 40.8,684.3 38.0,684.6 35.9,680.4 33.9,679.8 29.9,682.1 27.7,680.3 29.2,675.9 28.2,674.1 23.7,672.8 23.4,670.0 27.6,667.9 28.2,665.9 25.9,661.9 27.7,659.7 32.1,661.2 33.9,660.2 35.2,655.7 38.0,655.4 40.1,659.6 42.1,660.2 46.1,657.9 48.3,659.7 46.8,664.1 47.8,665.9" fill="#ececec" stroke="#ececec" stroke-width="1.4" stroke-linejoin="round"/><circle cx="38" cy="670" r="6" fill="#151b25"/><path d="M51 664 L42.4 677.6 H48.2 L45.4 687 L56 671.6 H50z" fill="#ffe64d" stroke="#c7a600" stroke-width=".6"/><rect x="23.4" y="720" width="24" height="26.6" rx="1" fill="#fafafa"/><path d="M27.4 726 H43.4 M27.4 730.4 H43.4 M27.4 734.8 H43.4 M27.4 739.2 H39" stroke="#6a6a6a" stroke-width="1.1"/><path d="M52 738 L56 742 L45 753 L39.6 754.4 L41 749Z" fill="#ffe64d" stroke="#a88c00" stroke-width=".6"/><path d="M52 738 L56 742 L54 744 L50 740Z" fill="#f24b4b"/><path d="M41 749 L45 753 L39.6 754.4Z" fill="#c8c8c8"/><path d="M31.4 790.6 q0 -3.4 3.4 -3.4 H54 q2.6 0 2.4 3 h-5 V813 q0 6.6 -6 6.6 H27.6 q-4.4 0 -4.2 -4 H31.4Z" fill="#f4f4f4"/><path d="M23.4 815.6 h19.4 q.4 4 3.4 4" fill="none" stroke="#b8b8b8" stroke-width=".8"/><path d="M35 794.4 H47.6 M35 798.8 H47.6 M35 803.2 H47.6 M35 807.6 H47.6" stroke="#6a6a6a" stroke-width="1.1"/><g fill="#fafafa"><rect x="23.4" y="855.6" width="24.6" height="3" rx="1"/><rect x="23.4" y="864.6" width="24.6" height="3" rx="1"/><rect x="23.4" y="873.6" width="16" height="3" rx="1"/></g><circle cx="48" cy="875.4" r="7.4" fill="#62d962" stroke="#2f9d3a" stroke-width=".8"/><path d="M43.6 875.4 h8.8 M48 871 v8.8" stroke="#f0fff0" stroke-width="1.3"/></svg>
<div class="b" style="left:1919px;top:42px;width:1px;height:930px;background:#3a405a;"></div>
<div class="t" style="left:1566.31px;top:49px;font-size:12.2px;line-height:14px;color:#eef0f6;font-weight:bold;letter-spacing:0.383px;">Operations history</div>
<svg style="left:1898px;top:48px" width="16" height="16"><path d="M2.2 2 L13.8 13.8 M13.8 2 L2.2 13.8" stroke="#ff5f5f" stroke-width="2.3" stroke-linecap="round"/></svg>
<div class="b" style="left:1566px;top:69.5px;width:351.5px;height:903.5px;border:1px solid #3a405a;border-radius:7px;"></div>
<div class="b" style="left:1572.5px;top:75px;width:340px;height:858.5px;background:#151b25;border:1px solid #333850;"></div>
<div class="b" style="left:1562.5px;top:498px;width:3.3px;height:19.5px;background:#1f78bc;border-radius:1px;"></div>
<div class="t" style="left:1597.41px;top:78px;font-size:14.67px;line-height:16px;color:#e8ebf3;letter-spacing:-0.236px;">schema_a.table_e (Table)</div>
<div class="b" style="left:1573.5px;top:96.5px;width:338px;height:21px;background:#1a1f2d;"></div>
<div class="t" style="left:1615.21px;top:99px;font-size:14.67px;line-height:16px;color:#e8ebf3;letter-spacing:0.261px;">moved</div>
<div class="t" style="left:1597.41px;top:120px;font-size:14.67px;line-height:16px;color:#e8ebf3;letter-spacing:-0.196px;">schema_a.table_d (Table)</div>
<div class="b" style="left:1573.5px;top:138.5px;width:338px;height:21px;background:#1a1f2d;"></div>
<div class="t" style="left:1615.21px;top:141px;font-size:14.67px;line-height:16px;color:#e8ebf3;letter-spacing:0.261px;">moved</div>
<div class="t" style="left:1597.41px;top:162px;font-size:14.67px;line-height:16px;color:#e8ebf3;letter-spacing:-0.184px;">schema_a.table_f (Table)</div>
<div class="b" style="left:1573.5px;top:180.5px;width:338px;height:21px;background:#1a1f2d;"></div>
<div class="t" style="left:1615.21px;top:183px;font-size:14.67px;line-height:16px;color:#e8ebf3;letter-spacing:0.261px;">moved</div>
<div class="t" style="left:1597.41px;top:204px;font-size:14.67px;line-height:16px;color:#e8ebf3;letter-spacing:-0.196px;">schema_a.table_d (Table)</div>
<div class="b" style="left:1573.5px;top:222.5px;width:338px;height:21px;background:#1a1f2d;"></div>
<div class="t" style="left:1615.21px;top:225px;font-size:14.67px;line-height:16px;color:#e8ebf3;letter-spacing:0.261px;">moved</div>
<div class="t" style="left:1597.41px;top:246px;font-size:14.67px;line-height:16px;color:#e8ebf3;letter-spacing:-0.196px;">schema_a.table_h (Table)</div>
<div class="b" style="left:1573.5px;top:264.5px;width:338px;height:21px;background:#1a1f2d;"></div>
<div class="t" style="left:1615.21px;top:267px;font-size:14.67px;line-height:16px;color:#e8ebf3;letter-spacing:0.261px;">moved</div>
<div class="t" style="left:1597.41px;top:288px;font-size:14.67px;line-height:16px;color:#e8ebf3;letter-spacing:-0.236px;">schema_a.table_e (Table)</div>
<div class="b" style="left:1573.5px;top:306.5px;width:338px;height:21px;background:#1a1f2d;"></div>
<div class="t" style="left:1615.21px;top:309px;font-size:14.67px;line-height:16px;color:#e8ebf3;letter-spacing:0.261px;">moved</div>
<div class="t" style="left:1597.41px;top:330px;font-size:14.67px;line-height:16px;color:#e8ebf3;letter-spacing:-0.325px;">schema_a.view_a (View)</div>
<div class="b" style="left:1573.5px;top:348.5px;width:338px;height:21px;background:#1a1f2d;"></div>
<div class="t" style="left:1615.21px;top:351px;font-size:14.67px;line-height:16px;color:#e8ebf3;letter-spacing:0.261px;">moved</div>
<div class="t" style="left:1597.41px;top:372px;font-size:14.67px;line-height:16px;color:#e8ebf3;letter-spacing:-0.325px;">schema_a.view_a (View)</div>
<div class="b" style="left:1573.5px;top:390.5px;width:338px;height:21px;background:#1a1f2d;"></div>
<div class="t" style="left:1615.21px;top:393px;font-size:14.67px;line-height:16px;color:#e8ebf3;letter-spacing:0.261px;">moved</div>
<div class="t" style="left:1597.41px;top:414px;font-size:14.67px;line-height:16px;color:#e8ebf3;letter-spacing:-0.249px;">schema_b.view_b1 (View)</div>
<div class="b" style="left:1573.5px;top:432.5px;width:338px;height:21px;background:#1a1f2d;"></div>
<div class="t" style="left:1615.21px;top:435px;font-size:14.67px;line-height:16px;color:#e8ebf3;letter-spacing:0.158px;">created</div>
<div class="t" style="left:1597.41px;top:456px;font-size:14.67px;line-height:16px;color:#e8ebf3;letter-spacing:-0.249px;">schema_b.view_b1 (View)</div>
<div class="b" style="left:1573.5px;top:474.5px;width:338px;height:21px;background:#1a1f2d;"></div>
<div class="t" style="left:1615.21px;top:477px;font-size:14.67px;line-height:16px;color:#e8ebf3;letter-spacing:0.261px;">moved</div>
<div class="t" style="left:1597.41px;top:498px;font-size:14.67px;line-height:16px;color:#e8ebf3;letter-spacing:-0.042px;">view_test_txt (Textbox)</div>
<div class="b" style="left:1573.5px;top:516.5px;width:338px;height:21px;background:#1a1f2d;"></div>
<div class="t" style="left:1615.21px;top:519px;font-size:14.67px;line-height:16px;color:#e8ebf3;letter-spacing:0.261px;">moved</div>
<div class="t" style="left:1597.41px;top:540px;font-size:14.67px;line-height:16px;color:#e8ebf3;letter-spacing:-0.042px;">view_test_txt (Textbox)</div>
<div class="b" style="left:1573.5px;top:558.5px;width:338px;height:21px;background:#1a1f2d;"></div>
<div class="t" style="left:1615.21px;top:561px;font-size:14.67px;line-height:16px;color:#e8ebf3;letter-spacing:0.184px;">removed</div>
<div class="t" style="left:1597.41px;top:582px;font-size:14.67px;line-height:16px;color:#e8ebf3;letter-spacing:-0.078px;">public.table_c (Table)</div>
<div class="b" style="left:1573.5px;top:600.5px;width:338px;height:21px;background:#1a1f2d;"></div>
<div class="t" style="left:1615.21px;top:603px;font-size:14.67px;line-height:16px;color:#e8ebf3;letter-spacing:0.261px;">moved</div>
<div class="t" style="left:1597.41px;top:624px;font-size:14.67px;line-height:16px;color:#e8ebf3;letter-spacing:-0.183px;">table_f_has_many_table_c (Relationship)</div>
<div class="b" style="left:1573.5px;top:642.5px;width:338px;height:21px;background:#1a1f2d;"></div>
<div class="t" style="left:1615.21px;top:645px;font-size:14.67px;line-height:16px;color:#e8ebf3;letter-spacing:0.184px;">removed</div>
<div class="t" style="left:1597.41px;top:666px;font-size:14.67px;line-height:16px;color:#e8ebf3;letter-spacing:-0.078px;">public.table_c (Table)</div>
<div class="b" style="left:1573.5px;top:684.5px;width:338px;height:21px;background:#1a1f2d;"></div>
<div class="t" style="left:1615.21px;top:687px;font-size:14.67px;line-height:16px;color:#e8ebf3;letter-spacing:0.184px;">removed</div>
<div class="t" style="left:1597.41px;top:708px;font-size:14.67px;line-height:16px;color:#e8ebf3;letter-spacing:-0.046px;">public.table_a (Table)</div>
<div class="b" style="left:1573.5px;top:726.5px;width:338px;height:21px;background:#1a1f2d;"></div>
<div class="t" style="left:1615.21px;top:729px;font-size:14.67px;line-height:16px;color:#e8ebf3;letter-spacing:0.261px;">moved</div>
<div class="t" style="left:1597.41px;top:750px;font-size:14.67px;line-height:16px;color:#e8ebf3;font-weight:bold;font-style:italic;letter-spacing:-0.417px;">public.table_b (Table)</div>
<div class="b" style="left:1573.5px;top:768.5px;width:338px;height:21px;background:#1a1f2d;"></div>
<div class="t" style="left:1615.21px;top:771px;font-size:14.67px;line-height:16px;color:#e8ebf3;font-weight:bold;font-style:italic;letter-spacing:-0.677px;">moved</div>
<svg style="left:0;top:0" width="1920" height="1010"><rect x="1575" y="78" width="17.4" height="15.4" fill="#fff"/><rect x="1575" y="78" width="17.4" height="4" fill="#4fdcf7"/><g fill="none" stroke="#e4e8ec"><circle cx="1606.1" cy="106.45" r="2.1" stroke-width="1.7"/><circle cx="1606.1" cy="106.45" r="3.25" stroke-width="1" stroke-dasharray="1.3 1.25"/><circle cx="1599.8" cy="111.6" r="2.1" stroke-width="1.7"/><circle cx="1599.8" cy="111.6" r="3.25" stroke-width="1" stroke-dasharray="1.3 1.25"/></g><g fill="#4fd8f7"><path d="M1597.9 97.80000000000001 l2.3 2.9 h-4.6z"/><path d="M1597.9 109.0 l2.3 -2.9 h-4.6z"/><path d="M1592.3000000000002 103.4 l2.9 -2.3 v4.6z"/><path d="M1603.5 103.4 l-2.9 -2.3 v4.6z"/><rect x="1596.8000000000002" y="102.80000000000001" width="2.2" height="1.2"/></g><rect x="1575" y="120" width="17.4" height="15.4" fill="#fff"/><rect x="1575" y="120" width="17.4" height="4" fill="#4fdcf7"/><g fill="none" stroke="#e4e8ec"><circle cx="1606.1" cy="148.45" r="2.1" stroke-width="1.7"/><circle cx="1606.1" cy="148.45" r="3.25" stroke-width="1" stroke-dasharray="1.3 1.25"/><circle cx="1599.8" cy="153.6" r="2.1" stroke-width="1.7"/><circle cx="1599.8" cy="153.6" r="3.25" stroke-width="1" stroke-dasharray="1.3 1.25"/></g><g fill="#4fd8f7"><path d="M1597.9 139.8 l2.3 2.9 h-4.6z"/><path d="M1597.9 151.0 l2.3 -2.9 h-4.6z"/><path d="M1592.3000000000002 145.4 l2.9 -2.3 v4.6z"/><path d="M1603.5 145.4 l-2.9 -2.3 v4.6z"/><rect x="1596.8000000000002" y="144.8" width="2.2" height="1.2"/></g><rect x="1575" y="162" width="17.4" height="15.4" fill="#fff"/><rect x="1575" y="162" width="17.4" height="4" fill="#4fdcf7"/><g fill="none" stroke="#e4e8ec"><circle cx="1606.1" cy="190.45" r="2.1" stroke-width="1.7"/><circle cx="1606.1" cy="190.45" r="3.25" stroke-width="1" stroke-dasharray="1.3 1.25"/><circle cx="1599.8" cy="195.6" r="2.1" stroke-width="1.7"/><circle cx="1599.8" cy="195.6" r="3.25" stroke-width="1" stroke-dasharray="1.3 1.25"/></g><g fill="#4fd8f7"><path d="M1597.9 181.8 l2.3 2.9 h-4.6z"/><path d="M1597.9 193.0 l2.3 -2.9 h-4.6z"/><path d="M1592.3000000000002 187.4 l2.9 -2.3 v4.6z"/><path d="M1603.5 187.4 l-2.9 -2.3 v4.6z"/><rect x="1596.8000000000002" y="186.8" width="2.2" height="1.2"/></g><rect x="1575" y="204" width="17.4" height="15.4" fill="#fff"/><rect x="1575" y="204" width="17.4" height="4" fill="#4fdcf7"/><g fill="none" stroke="#e4e8ec"><circle cx="1606.1" cy="232.45" r="2.1" stroke-width="1.7"/><circle cx="1606.1" cy="232.45" r="3.25" stroke-width="1" stroke-dasharray="1.3 1.25"/><circle cx="1599.8" cy="237.6" r="2.1" stroke-width="1.7"/><circle cx="1599.8" cy="237.6" r="3.25" stroke-width="1" stroke-dasharray="1.3 1.25"/></g><g fill="#4fd8f7"><path d="M1597.9 223.8 l2.3 2.9 h-4.6z"/><path d="M1597.9 235.0 l2.3 -2.9 h-4.6z"/><path d="M1592.3000000000002 229.4 l2.9 -2.3 v4.6z"/><path d="M1603.5 229.4 l-2.9 -2.3 v4.6z"/><rect x="1596.8000000000002" y="228.8" width="2.2" height="1.2"/></g><rect x="1575" y="246" width="17.4" height="15.4" fill="#fff"/><rect x="1575" y="246" width="17.4" height="4" fill="#4fdcf7"/><g fill="none" stroke="#e4e8ec"><circle cx="1606.1" cy="274.45" r="2.1" stroke-width="1.7"/><circle cx="1606.1" cy="274.45" r="3.25" stroke-width="1" stroke-dasharray="1.3 1.25"/><circle cx="1599.8" cy="279.6" r="2.1" stroke-width="1.7"/><circle cx="1599.8" cy="279.6" r="3.25" stroke-width="1" stroke-dasharray="1.3 1.25"/></g><g fill="#4fd8f7"><path d="M1597.9 265.79999999999995 l2.3 2.9 h-4.6z"/><path d="M1597.9 277.0 l2.3 -2.9 h-4.6z"/><path d="M1592.3000000000002 271.4 l2.9 -2.3 v4.6z"/><path d="M1603.5 271.4 l-2.9 -2.3 v4.6z"/><rect x="1596.8000000000002" y="270.79999999999995" width="2.2" height="1.2"/></g><rect x="1575" y="288" width="17.4" height="15.4" fill="#fff"/><rect x="1575" y="288" width="17.4" height="4" fill="#4fdcf7"/><g fill="none" stroke="#e4e8ec"><circle cx="1606.1" cy="316.45" r="2.1" stroke-width="1.7"/><circle cx="1606.1" cy="316.45" r="3.25" stroke-width="1" stroke-dasharray="1.3 1.25"/><circle cx="1599.8" cy="321.6" r="2.1" stroke-width="1.7"/><circle cx="1599.8" cy="321.6" r="3.25" stroke-width="1" stroke-dasharray="1.3 1.25"/></g><g fill="#4fd8f7"><path d="M1597.9 307.79999999999995 l2.3 2.9 h-4.6z"/><path d="M1597.9 319.0 l2.3 -2.9 h-4.6z"/><path d="M1592.3000000000002 313.4 l2.9 -2.3 v4.6z"/><path d="M1603.5 313.4 l-2.9 -2.3 v4.6z"/><rect x="1596.8000000000002" y="312.79999999999995" width="2.2" height="1.2"/></g><rect x="1575" y="330" width="17.4" height="15.4" fill="#fff"/><rect x="1575" y="330" width="17.4" height="4" fill="#ffb545"/><g fill="none" stroke="#e4e8ec"><circle cx="1606.1" cy="358.45" r="2.1" stroke-width="1.7"/><circle cx="1606.1" cy="358.45" r="3.25" stroke-width="1" stroke-dasharray="1.3 1.25"/><circle cx="1599.8" cy="363.6" r="2.1" stroke-width="1.7"/><circle cx="1599.8" cy="363.6" r="3.25" stroke-width="1" stroke-dasharray="1.3 1.25"/></g><g fill="#4fd8f7"><path d="M1597.9 349.79999999999995 l2.3 2.9 h-4.6z"/><path d="M1597.9 361.0 l2.3 -2.9 h-4.6z"/><path d="M1592.3000000000002 355.4 l2.9 -2.3 v4.6z"/><path d="M1603.5 355.4 l-2.9 -2.3 v4.6z"/><rect x="1596.8000000000002" y="354.79999999999995" width="2.2" height="1.2"/></g><rect x="1575" y="372" width="17.4" height="15.4" fill="#fff"/><rect x="1575" y="372" width="17.4" height="4" fill="#ffb545"/><g fill="none" stroke="#e4e8ec"><circle cx="1606.1" cy="400.45" r="2.1" stroke-width="1.7"/><circle cx="1606.1" cy="400.45" r="3.25" stroke-width="1" stroke-dasharray="1.3 1.25"/><circle cx="1599.8" cy="405.6" r="2.1" stroke-width="1.7"/><circle cx="1599.8" cy="405.6" r="3.25" stroke-width="1" stroke-dasharray="1.3 1.25"/></g><g fill="#4fd8f7"><path d="M1597.9 391.79999999999995 l2.3 2.9 h-4.6z"/><path d="M1597.9 403.0 l2.3 -2.9 h-4.6z"/><path d="M1592.3000000000002 397.4 l2.9 -2.3 v4.6z"/><path d="M1603.5 397.4 l-2.9 -2.3 v4.6z"/><rect x="1596.8000000000002" y="396.79999999999995" width="2.2" height="1.2"/></g><rect x="1575" y="414" width="17.4" height="15.4" fill="#fff"/><rect x="1575" y="414" width="17.4" height="4" fill="#ffb545"/><g fill="none" stroke="#e4e8ec"><circle cx="1606.1" cy="442.45" r="2.1" stroke-width="1.7"/><circle cx="1606.1" cy="442.45" r="3.25" stroke-width="1" stroke-dasharray="1.3 1.25"/><circle cx="1599.8" cy="447.6" r="2.1" stroke-width="1.7"/><circle cx="1599.8" cy="447.6" r="3.25" stroke-width="1" stroke-dasharray="1.3 1.25"/></g><circle cx="1597.4" cy="438.4" r="4.6" fill="#6fe06f"/><path d="M1594.4 438.4 h6 M1597.4 435.4 v6" stroke="#eaffea" stroke-width="1"/><rect x="1575" y="456" width="17.4" height="15.4" fill="#fff"/><rect x="1575" y="456" width="17.4" height="4" fill="#ffb545"/><g fill="none" stroke="#e4e8ec"><circle cx="1606.1" cy="484.45" r="2.1" stroke-width="1.7"/><circle cx="1606.1" cy="484.45" r="3.25" stroke-width="1" stroke-dasharray="1.3 1.25"/><circle cx="1599.8" cy="489.6" r="2.1" stroke-width="1.7"/><circle cx="1599.8" cy="489.6" r="3.25" stroke-width="1" stroke-dasharray="1.3 1.25"/></g><g fill="#4fd8f7"><path d="M1597.9 475.79999999999995 l2.3 2.9 h-4.6z"/><path d="M1597.9 487.0 l2.3 -2.9 h-4.6z"/><path d="M1592.3000000000002 481.4 l2.9 -2.3 v4.6z"/><path d="M1603.5 481.4 l-2.9 -2.3 v4.6z"/><rect x="1596.8000000000002" y="480.79999999999995" width="2.2" height="1.2"/></g><rect x="1575.3" y="497" width="16.9" height="17.2" rx="2" fill="#62e0fc"/><path d="M1579.6 502.4 v-1.9 h8.9 v1.9 M1584 500.5 V510.4 M1581.8 510.4 h4.4" fill="none" stroke="#45a3b8" stroke-width="1"/><path d="M1588.6 514.2 v-3.2 h3.6z" fill="#f4f0ec"/><g fill="none" stroke="#e4e8ec"><circle cx="1606.1" cy="526.45" r="2.1" stroke-width="1.7"/><circle cx="1606.1" cy="526.45" r="3.25" stroke-width="1" stroke-dasharray="1.3 1.25"/><circle cx="1599.8" cy="531.6" r="2.1" stroke-width="1.7"/><circle cx="1599.8" cy="531.6" r="3.25" stroke-width="1" stroke-dasharray="1.3 1.25"/></g><g fill="#4fd8f7"><path d="M1597.9 517.8 l2.3 2.9 h-4.6z"/><path d="M1597.9 529.0 l2.3 -2.9 h-4.6z"/><path d="M1592.3000000000002 523.4 l2.9 -2.3 v4.6z"/><path d="M1603.5 523.4 l-2.9 -2.3 v4.6z"/><rect x="1596.8000000000002" y="522.8" width="2.2" height="1.2"/></g><rect x="1575.3" y="539" width="16.9" height="17.2" rx="2" fill="#62e0fc"/><path d="M1579.6 544.4 v-1.9 h8.9 v1.9 M1584 542.5 V552.4 M1581.8 552.4 h4.4" fill="none" stroke="#45a3b8" stroke-width="1"/><path d="M1588.6 556.2 v-3.2 h3.6z" fill="#f4f0ec"/><g fill="none" stroke="#e4e8ec"><circle cx="1606.1" cy="568.45" r="2.1" stroke-width="1.7"/><circle cx="1606.1" cy="568.45" r="3.25" stroke-width="1" stroke-dasharray="1.3 1.25"/><circle cx="1599.8" cy="573.6" r="2.1" stroke-width="1.7"/><circle cx="1599.8" cy="573.6" r="3.25" stroke-width="1" stroke-dasharray="1.3 1.25"/></g><circle cx="1597.4" cy="564.4" r="4.6" fill="#ff5a5a"/><path d="M1594.2 564.4 h6.4" stroke="#ffecec" stroke-width="1.2"/><rect x="1575" y="582" width="17.4" height="15.4" fill="#fff"/><rect x="1575" y="582" width="17.4" height="4" fill="#4fdcf7"/><g fill="none" stroke="#e4e8ec"><circle cx="1606.1" cy="610.45" r="2.1" stroke-width="1.7"/><circle cx="1606.1" cy="610.45" r="3.25" stroke-width="1" stroke-dasharray="1.3 1.25"/><circle cx="1599.8" cy="615.6" r="2.1" stroke-width="1.7"/><circle cx="1599.8" cy="615.6" r="3.25" stroke-width="1" stroke-dasharray="1.3 1.25"/></g><g fill="#4fd8f7"><path d="M1597.9 601.8 l2.3 2.9 h-4.6z"/><path d="M1597.9 613.0 l2.3 -2.9 h-4.6z"/><path d="M1592.3000000000002 607.4 l2.9 -2.3 v4.6z"/><path d="M1603.5 607.4 l-2.9 -2.3 v4.6z"/><rect x="1596.8000000000002" y="606.8" width="2.2" height="1.2"/></g><path d="M1575.1 627.4 H1592.1" stroke="#dcdcdc" stroke-width="1.1"/><path d="M1579.7 627.4 l3.85 -3.85 l3.85 3.85 l-3.85 3.85z" fill="#e2e2e2"/><rect x="1577.1" y="633" width="13.1" height="7.1" rx=".6" fill="#f2f2f2"/><text x="1577.9" y="639.2" font-size="6.4" font-family="Liberation Sans" fill="#8c8c8c" font-weight="bold" letter-spacing=".2">REL</text><g fill="none" stroke="#e4e8ec"><circle cx="1606.1" cy="652.45" r="2.1" stroke-width="1.7"/><circle cx="1606.1" cy="652.45" r="3.25" stroke-width="1" stroke-dasharray="1.3 1.25"/><circle cx="1599.8" cy="657.6" r="2.1" stroke-width="1.7"/><circle cx="1599.8" cy="657.6" r="3.25" stroke-width="1" stroke-dasharray="1.3 1.25"/></g><circle cx="1597.4" cy="648.4" r="4.6" fill="#ff5a5a"/><path d="M1594.2 648.4 h6.4" stroke="#ffecec" stroke-width="1.2"/><rect x="1575" y="666" width="17.4" height="15.4" fill="#fff"/><rect x="1575" y="666" width="17.4" height="4" fill="#4fdcf7"/><g fill="none" stroke="#e4e8ec"><circle cx="1606.1" cy="694.45" r="2.1" stroke-width="1.7"/><circle cx="1606.1" cy="694.45" r="3.25" stroke-width="1" stroke-dasharray="1.3 1.25"/><circle cx="1599.8" cy="699.6" r="2.1" stroke-width="1.7"/><circle cx="1599.8" cy="699.6" r="3.25" stroke-width="1" stroke-dasharray="1.3 1.25"/></g><circle cx="1597.4" cy="690.4" r="4.6" fill="#ff5a5a"/><path d="M1594.2 690.4 h6.4" stroke="#ffecec" stroke-width="1.2"/><rect x="1575" y="708" width="17.4" height="15.4" fill="#fff"/><rect x="1575" y="708" width="17.4" height="4" fill="#4fdcf7"/><g fill="none" stroke="#e4e8ec"><circle cx="1606.1" cy="736.45" r="2.1" stroke-width="1.7"/><circle cx="1606.1" cy="736.45" r="3.25" stroke-width="1" stroke-dasharray="1.3 1.25"/><circle cx="1599.8" cy="741.6" r="2.1" stroke-width="1.7"/><circle cx="1599.8" cy="741.6" r="3.25" stroke-width="1" stroke-dasharray="1.3 1.25"/></g><g fill="#4fd8f7"><path d="M1597.9 727.8 l2.3 2.9 h-4.6z"/><path d="M1597.9 739.0 l2.3 -2.9 h-4.6z"/><path d="M1592.3000000000002 733.4 l2.9 -2.3 v4.6z"/><path d="M1603.5 733.4 l-2.9 -2.3 v4.6z"/><rect x="1596.8000000000002" y="732.8" width="2.2" height="1.2"/></g><rect x="1575" y="750" width="17.4" height="15.4" fill="#fff"/><rect x="1575" y="750" width="17.4" height="4" fill="#4fdcf7"/><g fill="none" stroke="#e4e8ec"><circle cx="1606.1" cy="778.45" r="2.1" stroke-width="1.7"/><circle cx="1606.1" cy="778.45" r="3.25" stroke-width="1" stroke-dasharray="1.3 1.25"/><circle cx="1599.8" cy="783.6" r="2.1" stroke-width="1.7"/><circle cx="1599.8" cy="783.6" r="3.25" stroke-width="1" stroke-dasharray="1.3 1.25"/></g><g fill="#4fd8f7"><path d="M1597.9 769.8 l2.3 2.9 h-4.6z"/><path d="M1597.9 781.0 l2.3 -2.9 h-4.6z"/><path d="M1592.3000000000002 775.4 l2.9 -2.3 v4.6z"/><path d="M1603.5 775.4 l-2.9 -2.3 v4.6z"/><rect x="1596.8000000000002" y="774.8" width="2.2" height="1.2"/></g></svg>
<svg style="left:0;top:0" width="1920" height="1010"><rect x="1571.8" y="943.2" width="13.6" height="3.4" rx="1.2" fill="#ff5a5a"/><rect x="1571.8" y="948.9" width="13.6" height="3.4" rx="1.2" fill="#ffe84a"/><rect x="1571.8" y="954.6" width="13.6" height="3.4" rx="1.2" fill="#6fe06f"/><rect x="1571.8" y="960.3" width="13.6" height="3.4" rx="1.2" fill="#4fdcf7"/><rect x="1620.4" y="943.2" width="13.6" height="3.4" rx="1.2" fill="#ff5a5a"/><rect x="1620.4" y="948.9" width="13.6" height="3.4" rx="1.2" fill="#ffe84a"/><rect x="1620.4" y="954.6" width="13.6" height="3.4" rx="1.2" fill="#6fe06f"/><rect x="1620.4" y="960.3" width="13.6" height="3.4" rx="1.2" fill="#4fdcf7"/><path d="M1590.5 945.6 V961.8" stroke="#4fdcf7" stroke-width="1" stroke-dasharray="1.6 1.4"/><path d="M1587.8 943.2 h5.4 l-2.7 2.8z M1587.8 963.9 h5.4 l-2.7 -2.8z" fill="#f0f0f0"/><path d="M1639 954 v4.2 l-2.8 -2.1z" fill="#f0f0f0"/></svg>
<div class="t" style="left:1598.01px;top:946px;font-size:14.67px;line-height:16px;color:#e6e9f2;letter-spacing:-0.542px;">17</div>
<div class="t" style="left:1645.21px;top:946px;font-size:14.67px;line-height:16px;color:#e6e9f2;letter-spacing:-0.542px;">17</div>
<div class="b" style="left:1816.8px;top:939px;width:28.4px;height:28.8px;background:#373d57;border:1px solid #414866;border-radius:4px;"></div>
<div class="b" style="left:1850.2px;top:939px;width:28.4px;height:28.8px;background:#373d57;border:1px solid #414866;border-radius:4px;"></div>
<div class="b" style="left:1883.9px;top:939.7px;width:27px;height:27.4px;background:#23283a;border-radius:4px;"></div>
<svg style="left:0;top:0" width="1920" height="1010"><rect x="1823.1" y="949.2" width="15" height="13.8" rx="1.2" fill="#eef1f1"/><rect x="1822.3" y="945.7" width="16.6" height="2.7" rx=".8" fill="#f4f6f6"/><path d="M1820.2 948.7 h20.8" stroke="#8a9696" stroke-width=".8"/><path d="M1828 945.7 l2.7 -3.2 l2.7 3.2" fill="none" stroke="#8a9a9a" stroke-width="1"/><path d="M1826.6 951 v9 M1830.6 951 v9 M1834.6 951 v9" stroke="#7a8a8a" stroke-width="1.3"/><path d="M1853.8 947.2 L1856.3 949.7 Q1870.4 945 1874.8 958.7 Q1869.4 951.8 1862.2 955.2 L1864.8 958.7 H1853.8Z" fill="#ffec4f" stroke="#d9c024" stroke-width=".5" stroke-linejoin="round"/><path d="M1907.4 947.2 L1904.9 949.7 Q1890.8 945 1886.4 958.7 Q1891.8 951.8 1899 955.2 L1896.4 958.7 H1907.4Z" fill="#444959"/></svg>
<div class="b" style="left:82.5px;top:977.5px;width:100.0px;height:29px;background:#394059;border-radius:4px;"></div>
<div class="b" style="left:187.5px;top:977.5px;width:79.30000000000001px;height:29px;background:#394059;border-radius:4px;"></div>
<div class="b" style="left:271.4px;top:977.5px;width:77.60000000000002px;height:29px;background:#394059;border-radius:4px;"></div>
<div class="b" style="left:353.7px;top:977.5px;width:106.5px;height:29px;background:#394059;border-radius:4px;"></div>
<div class="b" style="left:847.9px;top:977.5px;width:207.19999999999993px;height:29px;background:#394059;border-radius:4px;"></div>
<div class="b" style="left:1059.7px;top:977.5px;width:163.29999999999995px;height:29px;background:#394059;border-radius:4px;"></div>
<div class="b" style="left:1719.8px;top:977.5px;width:84.60000000000014px;height:29px;background:#394059;border-radius:4px;"></div>
<div class="b" style="left:1227.6px;top:977.5px;width:69.20000000000005px;height:29px;background:#3f688c;border-radius:4px;border:1.2px solid #4bbcea;"></div>
<div class="b" style="left:1808.3px;top:977.5px;width:108.90000000000009px;height:29px;background:#1b73b5;border-radius:4px;border:1.2px solid #2793e0;"></div>
<div class="b" style="left:977px;top:982px;width:1px;height:20px;background:#454c68;"></div>
<div class="b" style="left:1141.5px;top:982px;width:1px;height:20px;background:#454c68;"></div>
<div class="t" style="left:109.41px;top:985px;font-size:14.67px;line-height:16px;color:#e6e9f2;letter-spacing:0.393px;"><u>V</u>alidation</div>
<div class="t" style="left:214.71px;top:985px;font-size:14.67px;line-height:16px;color:#e6e9f2;letter-spacing:-0.221px;">Sea<u>r</u>ch</div>
<div class="t" style="left:298.91px;top:985px;font-size:14.67px;line-height:16px;color:#e6e9f2;letter-spacing:-0.171px;"><u>L</u>ayers</div>
<div class="t" style="left:381.21px;top:985px;font-size:14.67px;line-height:16px;color:#e6e9f2;letter-spacing:0.114px;">C<u>h</u>angelog</div>
<div class="t" style="left:877.11px;top:985px;font-size:14.67px;line-height:16px;color:#e6e9f2;letter-spacing:-0.293px;">1909, 1226</div>
<div class="t" style="left:1010.41px;top:985px;font-size:14.67px;line-height:16px;color:#e6e9f2;letter-spacing:-0.594px;">70%</div>
<div class="t" style="left:1088.91px;top:985px;font-size:14.67px;line-height:16px;color:#e6e9f2;">None</div>
<div class="t" style="left:1174.21px;top:985px;font-size:14.67px;line-height:16px;color:#e6e9f2;letter-spacing:0.168px;">None</div>
<div class="t" style="left:1257.41px;top:985px;font-size:14.67px;line-height:16px;color:#e6e9f2;letter-spacing:0.354px;">.dbm</div>
<div class="t" style="left:1747.41px;top:985px;font-size:14.67px;line-height:16px;color:#e6e9f2;letter-spacing:0.040px;">Ob<u>j</u>ects</div>
<div class="t" style="left:1836.41px;top:985px;font-size:14.67px;line-height:16px;color:#f4f8ff;letter-spacing:0.235px;"><u>O</u>perations</div>
<svg style="left:0;top:0" width="1920" height="1010"><rect x="87.4" y="981.4" width="16.4" height="14" rx="1.5" fill="#fff" stroke="#d0d0d0" stroke-width=".6"/><circle cx="92.0" cy="987.0" r="3.2" fill="#f24b4b"/><rect x="92.3" y="988.4" width="4.9" height="4.6" fill="#4fd3f7"/><path d="M95.9 992.9 l2.8 -8.4 l2.8 8.4z" fill="#62d962"/><path d="M93.4 996.6 l4.4 4.6 l9.4 -10.6" fill="none" stroke="#62d962" stroke-width="3.2"/><rect x="192.4" y="981.6" width="16.4" height="14" rx="1.5" fill="#fff" stroke="#d0d0d0" stroke-width=".6"/><circle cx="197.0" cy="987.2" r="3.2" fill="#f24b4b"/><rect x="197.3" y="988.6" width="4.9" height="4.6" fill="#4fd3f7"/><path d="M200.9 993.1 l2.8 -8.4 l2.8 8.4z" fill="#62d962"/><path d="M206.6 998.6 L212.4 1004.4" stroke="#2f8794" stroke-width="1.4"/><circle cx="203.8" cy="994.6" r="5.4" fill="#c9f5fb" stroke="#8fd8e4" stroke-width=".8"/><path d="M277.6 998.6 l9.8 -4 l9.8 4 l-9.8 4z" fill="#ffe64d"/><path d="M277.6 992.4 l9.8 -4 l9.8 4 l-9.8 4z" fill="#4fd3f7"/><path d="M277.6 986.4 l9.8 -4 l9.8 4 l-9.8 4z" fill="#f24b4b"/><path d="M363.6 981.4 h9 l4.4 4.4 v17 h-13.4z" fill="#fafafa"/><path d="M359.6 983.6 h6.6 l2.4 2.4 l-2.4 2.4 h-6.6z" fill="#62d962" stroke="#2f9d3a" stroke-width=".5"/><path d="M359.6 995 h6.6 l2.4 2.4 l-2.4 2.4 h-6.6z" fill="#f24b4b" stroke="#b02020" stroke-width=".5"/><circle cx="375.8" cy="998.4" r="4.4" fill="#4fd3f7" stroke="#1c9bd1" stroke-width=".8"/><path d="M375.8 995.8 V998.6 H377.8" fill="none" stroke="#fff" stroke-width="1"/><path d="M853.6 983.2 l6.4 2.4 l-3 1.2 l-1.2 3z" fill="#f0f0f0"/><g fill="#4fd3f7"><path d="M864 986.6 l2.6 2.8 h-5.2z"/><path d="M864 1003 l2.6 -2.8 h-5.2z"/><path d="M855.8 994.8 l2.8 -2.6 v5.2z"/><path d="M872.2 994.8 l-2.8 -2.6 v5.2z"/></g><rect x="862" y="992.8" width="4" height="4" fill="none" stroke="#4fd3f7" stroke-width="1"/><path d="M998 997.6 L1006 1005.4" stroke="#2f8794" stroke-width="1.3"/><circle cx="993.6" cy="990.4" r="6.2" fill="#c9f5fb"/><path d="M1068.6 986 L1081.4 1000.4 M1081.4 986 L1068.6 1000.4" stroke="#f24b4b" stroke-width="3.4" stroke-linecap="round"/><rect x="1152.4" y="984.2" width="16.4" height="17" rx="1.4" fill="#e8e8e8"/><rect x="1154" y="986" width="5.6" height="5.6" fill="#4fd3f7" stroke="#1c7fa0" stroke-width=".5"/><circle cx="1164.4" cy="988.8" r="3" fill="#62d962" stroke="#2f9d3a" stroke-width=".5"/><path d="M1156.8 993 l2.8 3.4 l-2.8 3.4 l-2.8 -3.4z" fill="#f24b4b"/><path d="M1161.4 999.6 l3 -6 l3 6z" fill="#ffe64d" stroke="#c7a600" stroke-width=".4"/><rect x="1233.6" y="983.6" width="14.6" height="12.4" rx="1.5" fill="#fff" stroke="#d0d0d0" stroke-width=".6"/><circle cx="1237.7" cy="988.6" r="2.9" fill="#f24b4b"/><rect x="1238.0" y="989.8" width="4.4" height="4.1" fill="#4fd3f7"/><path d="M1241.2 993.8 l2.5 -7.4 l2.5 7.4z" fill="#62d962"/><path d="M1243.6 996.6 h7.6 l2 3 l-3 3.6 h-7z" fill="#a8c8e8" stroke="#88a" stroke-width=".5"/><path d="M1249.6 1003 l3.6 -3.6" stroke="#ffe64d" stroke-width="1.6"/><path d="M1241.6 991.6 l3 3 l3 -3" fill="none" stroke="#62d962" stroke-width="1.4"/><rect x="1726.4" y="984.4" width="7.6" height="7.4" fill="#4fd3f7"/><circle cx="1740.6" cy="987.6" r="4" fill="#62d962"/><path d="M1730 993.8 l3.4 4.2 l-3.4 4.2 l-3.4 -4.2z" fill="#f24b4b"/><path d="M1735.6 1002.2 l4.6 -8 l4.6 8z" fill="#ffe64d"/><rect x="1814.6" y="983.6" width="16" height="13.4" rx="1.5" fill="#fff" stroke="#d0d0d0" stroke-width=".6"/><circle cx="1819.1" cy="989.0" r="3.1" fill="#f24b4b"/><rect x="1819.4" y="990.3" width="4.8" height="4.4" fill="#4fd3f7"/><path d="M1822.9 994.6 l2.7 -8.0 l2.7 8.0z" fill="#62d962"/><g fill="none" stroke="#e4e8ec"><circle cx="1830.4" cy="992.6" r="2.1" stroke-width="1.7"/><circle cx="1830.4" cy="992.6" r="3.25" stroke-width="1" stroke-dasharray="1.3 1.25"/><circle cx="1824" cy="999.6" r="2.1" stroke-width="1.7"/><circle cx="1824" cy="999.6" r="3.25" stroke-width="1" stroke-dasharray="1.3 1.25"/></g></svg>
</body></html>
